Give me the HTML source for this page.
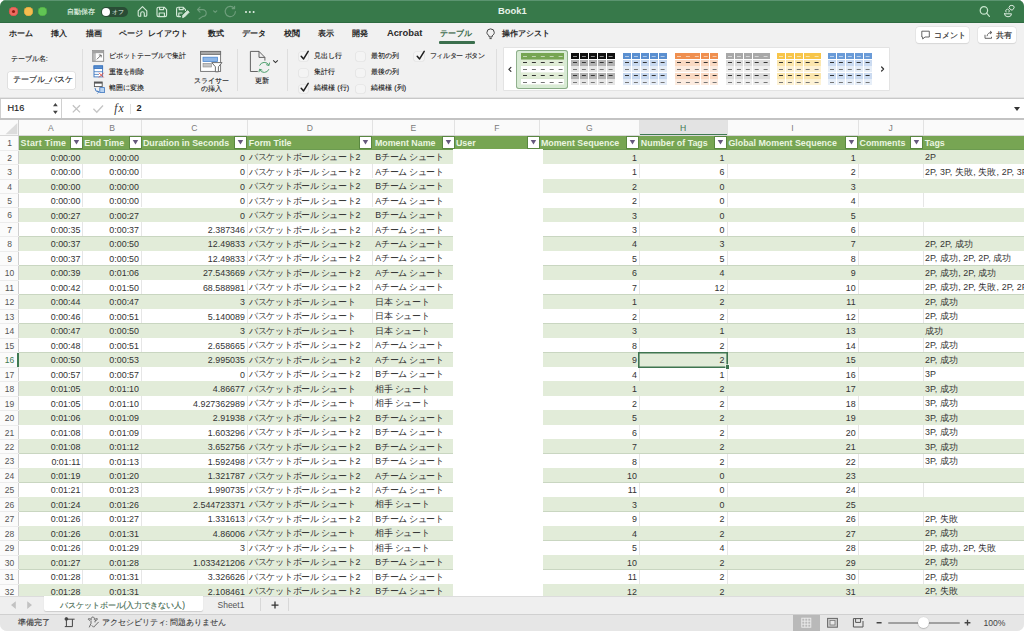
<!DOCTYPE html>
<html><head><meta charset="utf-8"><style>
*{box-sizing:border-box;margin:0;padding:0}
html,body{width:1024px;height:631px;overflow:hidden;background:#fff;font-family:"Liberation Sans",sans-serif}
.a{position:absolute}
#win{position:absolute;left:0;top:0;width:1024px;height:631px;overflow:hidden;border-radius:6px 6px 7px 7px;background:#f1f1f1}
.t{position:absolute;white-space:nowrap;line-height:1}
.rb{-webkit-text-stroke:0.12px currentColor}
.bb{-webkit-text-stroke:0.15px currentColor}
</style></head><body><div id="win">

<div class="a" style="left:0;top:0;width:1024px;height:23px;background:#37794a"></div>
<div class="a" style="left:0;top:0;width:1024px;height:1px;background:#5b9470"></div>
<div class="a" style="left:0;top:21.5px;width:1024px;height:1.5px;background:#2e6b41"></div>
<div class="a" style="left:9.3px;top:7.1px;width:9.2px;height:9.2px;border-radius:50%;background:#ee6a5f;box-shadow:inset 0 0 0 0.6px #d0504a"></div>
<div class="a" style="left:23.5px;top:7.1px;width:9.2px;height:9.2px;border-radius:50%;background:#f5bd4f;box-shadow:inset 0 0 0 0.6px #d8a03c"></div>
<div class="a" style="left:38.199999999999996px;top:7.1px;width:9.2px;height:9.2px;border-radius:50%;background:#61c454;box-shadow:inset 0 0 0 0.6px #4aa63f"></div>
<div class="a" style="left:12.3px;top:10.1px;width:3.2px;height:3.2px;border-radius:50%;background:#8c1a10"></div>
<div class="t" style="left:67px;top:8px;font-size:7.4px;color:#dcebdf;-webkit-text-stroke:0.2px #dcebdf">自動保存</div>
<div class="a" style="left:101px;top:7.4px;width:27px;height:9.2px;border-radius:5px;background:#294c35"></div>
<div class="a" style="left:101.6px;top:7.9px;width:8.2px;height:8.2px;border-radius:50%;background:#fff"></div>
<div class="t" style="left:111.5px;top:8.6px;font-size:6px;color:#e8f0ea">オフ</div>
<div class="t" style="left:498px;top:6.3px;font-size:9.4px;font-weight:bold;color:#e6f2e8">Book1</div>
<svg class="a" style="left:0;top:0" width="1024" height="23" viewBox="0 0 1024 23" fill="none" stroke="#d3e8d7" stroke-width="1.15" stroke-linejoin="round" stroke-linecap="round">
<path d="M138.2 10.8 L142.5 6.6 L146.8 10.8 V15.2 Q146.8 16.2 145.8 16.2 H144.3 V13.6 A1.8 1.8 0 0 0 140.7 13.6 V16.2 H139.2 Q138.2 16.2 138.2 15.2 Z"/>
<path d="M158.6 7.2 H164.2 L166.6 9.6 V15 Q166.6 16.6 165 16.6 H158.6 Q157 16.6 157 15 V8.8 Q157 7.2 158.6 7.2 Z M159.6 7.2 V9.6 H163.6 V7.2 M159.2 16.6 V13 H164.4 V16.6"/>
<path d="M185.5 10.5 V9.6 L183.1 7.2 H178.2 Q176.6 7.2 176.6 8.8 V15 Q176.6 16.6 178.2 16.6 H180.5 M179.2 7.2 V9.6 H183.2 V7.2 M178.8 16.6 V13 H182"/>
<path d="M182.6 17.2 L182.9 15.3 L187.6 10.6 L189.2 12.2 L184.5 16.9 Z" fill="#d3e8d7" stroke-width="0.9"/>
<g stroke="#6e9e7c"><path d="M197.5 9.6 H202.8 A3.4 3.4 0 0 1 202.8 16.4 M197.5 9.6 L200 7.1 M197.5 9.6 L200 12.1 M202.8 16.4 L199 19"/>
<path d="M213.6 10.9 L215.2 12.3 L216.8 10.9"/>
<path d="M234.2 8.2 A5.1 5.1 0 1 0 235.4 11.6 M234.6 6.2 V8.6 H232.2"/></g>
</svg>
<div class="a" style="left:245px;top:10.6px;width:2.2px;height:2.2px;border-radius:50%;background:#e4efe6;box-shadow:3.8px 0 0 #e4efe6,7.6px 0 0 #e4efe6"></div>
<svg class="a" style="left:960px;top:0" width="64" height="23" viewBox="960 0 64 23" fill="none" stroke="#dcebdf" stroke-width="1" stroke-linecap="round">
<circle cx="983.9" cy="10.4" r="3.7" stroke="#c8e6cd" stroke-width="1.2"/><path d="M986.6 13.2 L989.4 16.3" stroke="#c8e6cd" stroke-width="1.2"/>
<path d="M1004.5 13.8 H1011.5 A3.5 3 0 0 1 1004.5 13.8 Z M1006 12 A1.8 1.8 0 1 1 1009 12 M1009 7.3 A2.6 2.2 0 0 1 1014.2 7.8 L1012.2 10.3 L1010.3 9.2 Z"/>
</svg>
<div class="t" style="left:8.5px;top:28.8px;font-size:8.45px;font-weight:bold;color:#2a2a2a;">ホーム</div>
<div class="t" style="left:51.4px;top:28.8px;font-size:8.45px;font-weight:bold;color:#2a2a2a;">挿入</div>
<div class="t" style="left:85.6px;top:28.8px;font-size:8.45px;font-weight:bold;color:#2a2a2a;">描画</div>
<div class="t" style="left:119.3px;top:28.8px;font-size:8.45px;font-weight:bold;color:#2a2a2a;word-spacing:2.2px;">ページ レイアウト</div>
<div class="t" style="left:207.60000000000002px;top:28.8px;font-size:8.45px;font-weight:bold;color:#2a2a2a;">数式</div>
<div class="t" style="left:241.8px;top:28.8px;font-size:8.45px;font-weight:bold;color:#2a2a2a;">データ</div>
<div class="t" style="left:284.3px;top:28.8px;font-size:8.45px;font-weight:bold;color:#2a2a2a;">校閲</div>
<div class="t" style="left:318.1px;top:28.8px;font-size:8.45px;font-weight:bold;color:#2a2a2a;">表示</div>
<div class="t" style="left:352.3px;top:28.8px;font-size:8.45px;font-weight:bold;color:#2a2a2a;">開発</div>
<div class="t" style="left:386.90000000000003px;top:28.0px;font-size:9.4px;font-weight:bold;color:#2a2a2a;">Acrobat</div>
<div class="t" style="left:440.3px;top:28.8px;font-size:8.45px;font-weight:bold;color:#3d6b4c;">テーブル</div>
<div class="t" style="left:501.8px;top:28.8px;font-size:8.45px;font-weight:bold;color:#2a2a2a;">操作アシスト</div>
<div class="a" style="left:439px;top:41.4px;width:35.6px;height:2.2px;border-radius:1.1px;background:#3b6f4d"></div>
<svg class="a" style="left:484px;top:26px" width="14" height="16" viewBox="484 26 14 16" fill="none" stroke="#444" stroke-width="0.9"><path d="M489.1 37 V35.8 C487.6 34.8 486.9 33.6 486.9 32.6 A3.7 3.7 0 0 1 494.3 32.6 C494.3 33.6 493.6 34.8 492.1 35.8 V37 Z M489.5 38.6 H491.7" stroke-width="1"/></svg>
<div class="a" style="left:915.7px;top:26.6px;width:53.3px;height:16px;border-radius:3px;background:#fff;box-shadow:0 0 0 0.5px #dcdcdc,0 0.5px 1px rgba(0,0,0,.12)"></div>
<div class="a" style="left:978px;top:26.6px;width:38.2px;height:16px;border-radius:3px;background:#fff;box-shadow:0 0 0 0.5px #dcdcdc,0 0.5px 1px rgba(0,0,0,.12)"></div>
<svg class="a" style="left:915px;top:26px" width="100" height="18" viewBox="915 26 100 18" fill="none" stroke="#555" stroke-width="0.9" stroke-linejoin="round">
<path d="M921.8 31.2 H929.3 V37 H925 L922.7 39 V37 H921.8 Z"/>
<path d="M985 34.8 V38.3 H991.5 V36.8 M987 36.2 C987.5 33.5 989.2 32.5 991.5 32.5 M990 31 L991.9 32.5 L990 34"/>
</svg>
<div class="t" style="left:933.9px;top:31.6px;font-size:7.8px;color:#333;-webkit-text-stroke:0.2px #333">コメント</div>
<div class="t" style="left:996.2px;top:31.6px;font-size:7.8px;color:#333;-webkit-text-stroke:0.2px #333">共有</div>
<div class="t rb" style="left:10.8px;top:54.8px;font-size:7.2px;color:#222">テーブル名:</div>
<div class="a" style="left:7.7px;top:71.5px;width:67.3px;height:17px;border-radius:1.8px;background:#fff;box-shadow:0 0 0 0.6px #d6d6d6"></div>
<div class="t" style="left:12.7px;top:76.4px;font-size:8.1px;color:#222;-webkit-text-stroke:0.15px #222">テーブル_バスケ</div>
<div class="a" style="left:81.9px;top:48.5px;width:1px;height:42.5px;background:#dedede"></div>
<div class="a" style="left:237.3px;top:48.5px;width:1px;height:42.5px;background:#dedede"></div>
<div class="a" style="left:287.2px;top:48.5px;width:1px;height:42.5px;background:#dedede"></div>
<div class="a" style="left:495.6px;top:48.5px;width:1px;height:42.5px;background:#dedede"></div>
<div class="t rb" style="left:109.4px;top:51.800000000000004px;font-size:7.2px;color:#222">ピボットテーブルで集計</div>
<div class="t rb" style="left:109.4px;top:68.2px;font-size:7.2px;color:#222">重複を削除</div>
<div class="t rb" style="left:109.4px;top:83.9px;font-size:7.2px;color:#222">範囲に変換</div>
<svg class="a" style="left:85px;top:44px" width="150" height="52" viewBox="85 44 150 52" fill="none" stroke-width="0.8">
<rect x="92.6" y="50.4" width="11.2" height="11.2" fill="#a3a3a3" stroke="#8a8a8a" stroke-width="0.6"/>
<rect x="95.6" y="53.2" width="7.4" height="7.6" fill="#fff" stroke="none"/>
<path d="M94.1 53.4 V60.6" stroke="#e8e8e8" stroke-width="0.7"/>
<path d="M96.8 59.4 L101.2 55 M101.2 55 V57.4 M101.2 55 H98.8" stroke="#555" stroke-width="0.8"/>
<rect x="94" y="65.9" width="8.6" height="11" fill="#fff" stroke="#3d76c0" stroke-width="0.9"/>
<rect x="94" y="65.9" width="8.6" height="2.6" fill="#5a8fd0" stroke="#3d76c0" stroke-width="0.9"/>
<path d="M94 71.7 H102.6 M94 74.4 H99" stroke="#3d76c0" stroke-width="0.8"/>
<path d="M99 72.8 L103.6 77.4 M103.6 72.8 L99 77.4" stroke="#e14a3c" stroke-width="0.9"/>
<rect x="94.4" y="82" width="7.8" height="4.6" fill="#fff" stroke="#555" stroke-width="0.9"/>
<rect x="94.4" y="82" width="7.8" height="1.6" fill="#555" stroke="none"/>
<path d="M95 88 Q95 92 98.8 92 M97.4 90.6 L98.8 92 L97.4 93.4" stroke="#3d76c0" stroke-width="0.9"/>
<rect x="99.8" y="87.6" width="4.6" height="5" fill="#b9d3f0" stroke="#3d76c0" stroke-width="0.8"/>
<rect x="200.6" y="51.4" width="20" height="20" fill="#fff" stroke="#6f6f6f" stroke-width="0.9"/>
<rect x="200.6" y="51.4" width="20" height="3" fill="#a8a8a8" stroke="#6f6f6f" stroke-width="0.9"/>
<rect x="203" y="57.2" width="14.4" height="4.2" fill="#8db6e6" stroke="#4a86cf" stroke-width="0.8"/>
<rect x="203" y="63.4" width="8.4" height="3.6" fill="#c4c4c4" stroke="#8a8a8a" stroke-width="0.6"/>
<path d="M211.8 62.6 H222 L218.4 66.8 V71.8 H215.4 V66.8 Z" fill="#fff" stroke="#5f5f5f" stroke-width="0.9" stroke-linejoin="round"/>
</svg>
<div class="t rb" style="left:193.8px;top:77.2px;font-size:7.4px;color:#222">スライサー</div>
<div class="t rb" style="left:200.5px;top:85.4px;font-size:7.4px;color:#222">の挿入</div>
<svg class="a" style="left:245px;top:48px" width="40" height="28" viewBox="245 48 40 28" fill="none" stroke-width="0.9">
<path d="M259 51.4 H250.4 V71.5 H257.8 M259 51.4 L264.9 57.4 V60.6 M259 51.4 V57.4 H264.9" stroke="#555" stroke-linejoin="miter"/>
<path d="M268.9 65.2 A5.1 5.1 0 0 0 259.6 65.6 M259.6 69.6 A5.1 5.1 0 0 0 268.9 69.2" stroke="#4f9f6e" stroke-width="1"/>
<path d="M269.6 62.6 L268.9 65.6 L266.2 64.6 M258.9 72.2 L259.6 69.2 L262.3 70.2" stroke="#4f9f6e" stroke-width="1" stroke-linejoin="round"/>
<path d="M273.2 60.4 L275.5 62.6 L277.8 60.4" stroke="#333" stroke-width="1.1"/>
</svg>
<div class="t rb" style="left:254.5px;top:77.2px;font-size:7.4px;color:#222">更新</div>
<div class="a" style="left:298.7px;top:52.4px;width:9.8px;height:8.2px;border-radius:2px;background:#f4f4f4;box-shadow:0 0 0 0.6px #e0e0e0"></div>
<svg class="a" style="left:299.3px;top:48.6px" width="12" height="12" viewBox="0 0 12 12"><path d="M2.2 7.2 L4.6 9.9 L9.2 2.4" fill="none" stroke="#1e1e1e" stroke-width="1.5" stroke-linecap="round" stroke-linejoin="round"/></svg>
<div class="t rb" style="left:314.3px;top:51.800000000000004px;font-size:7.2px;color:#222;">見出し行</div>
<div class="a" style="left:298.7px;top:68.8px;width:9.8px;height:8.2px;border-radius:2px;background:#f4f4f4;box-shadow:0 0 0 0.6px #e0e0e0"></div>
<div class="t rb" style="left:314.3px;top:68.2px;font-size:7.2px;color:#222;">集計行</div>
<div class="a" style="left:298.7px;top:84.5px;width:9.8px;height:8.2px;border-radius:2px;background:#f4f4f4;box-shadow:0 0 0 0.6px #e0e0e0"></div>
<svg class="a" style="left:299.3px;top:80.7px" width="12" height="12" viewBox="0 0 12 12"><path d="M2.2 7.2 L4.6 9.9 L9.2 2.4" fill="none" stroke="#1e1e1e" stroke-width="1.5" stroke-linecap="round" stroke-linejoin="round"/></svg>
<div class="t rb" style="left:314.3px;top:83.9px;font-size:7.2px;color:#222;">縞模様 (行)</div>
<div class="a" style="left:355.7px;top:52.4px;width:9.8px;height:8.2px;border-radius:2px;background:#f4f4f4;box-shadow:0 0 0 0.6px #e0e0e0"></div>
<div class="t rb" style="left:371.3px;top:51.800000000000004px;font-size:7.2px;color:#222;">最初の列</div>
<div class="a" style="left:355.7px;top:68.8px;width:9.8px;height:8.2px;border-radius:2px;background:#f4f4f4;box-shadow:0 0 0 0.6px #e0e0e0"></div>
<div class="t rb" style="left:371.3px;top:68.2px;font-size:7.2px;color:#222;">最後の列</div>
<div class="a" style="left:355.7px;top:84.5px;width:9.8px;height:8.2px;border-radius:2px;background:#f4f4f4;box-shadow:0 0 0 0.6px #e0e0e0"></div>
<div class="t rb" style="left:371.3px;top:83.9px;font-size:7.2px;color:#222;">縞模様 (列)</div>
<div class="a" style="left:414.2px;top:52.4px;width:9.8px;height:8.2px;border-radius:2px;background:#f4f4f4;box-shadow:0 0 0 0.6px #e0e0e0"></div>
<svg class="a" style="left:414.8px;top:48.6px" width="12" height="12" viewBox="0 0 12 12"><path d="M2.2 7.2 L4.6 9.9 L9.2 2.4" fill="none" stroke="#1e1e1e" stroke-width="1.5" stroke-linecap="round" stroke-linejoin="round"/></svg>
<div class="t rb" style="left:429.8px;top:51.800000000000004px;font-size:7.2px;color:#222;letter-spacing:-0.35px;">フィルター ボタン</div>
<div class="a" style="left:504px;top:48.1px;width:384.5px;height:42.2px;background:#fff;box-shadow:0 0 0 0.6px #d9d9d9"></div>
<svg class="a" style="left:504px;top:48px" width="385" height="43" viewBox="504 48 385 43" fill="none" stroke="#333" stroke-width="0.9" stroke-linecap="round" stroke-linejoin="round"><path d="M510.9 67.4 L508.9 69.4 L510.9 71.4" stroke-width="1.2"/><path d="M881.6 67 L883.6 69 L881.6 71" stroke-width="1.2"/></svg>
<div class="a" style="left:516.2px;top:50px;width:51.8px;height:38.6px;border-radius:3px;background:#d9ebd5;box-shadow:inset 0 0 0 0.9px #89ab86"></div>
<div class="a" style="left:520.6px;top:53.2px;width:43px;height:6.55px;background:#77a552;box-shadow:inset 0 -0.5px 0 #d5e3cc"></div>
<div class="a" style="left:522.8px;top:55.6px;width:4px;height:1.1px;background:rgba(255,255,255,.55);box-shadow:8.9px 0 0 rgba(255,255,255,.55),17.8px 0 0 rgba(255,255,255,.55),26.7px 0 0 rgba(255,255,255,.55),35.6px 0 0 rgba(255,255,255,.55)"></div>
<div class="a" style="left:520.6px;top:59.75px;width:43px;height:6.55px;background:#e0ecd6;box-shadow:inset 0 -0.5px 0 #d5e3cc"></div>
<div class="a" style="left:522.8px;top:62.15px;width:4px;height:1.1px;background:#333;box-shadow:8.9px 0 0 #333,17.8px 0 0 #333,26.7px 0 0 #333,35.6px 0 0 #333"></div>
<div class="a" style="left:520.6px;top:66.3px;width:43px;height:6.55px;background:#ffffff;box-shadow:inset 0 -0.5px 0 #d5e3cc"></div>
<div class="a" style="left:522.8px;top:68.7px;width:4px;height:1.1px;background:#777;box-shadow:8.9px 0 0 #777,17.8px 0 0 #777,26.7px 0 0 #777,35.6px 0 0 #777"></div>
<div class="a" style="left:520.6px;top:72.85px;width:43px;height:6.55px;background:#e0ecd6;box-shadow:inset 0 -0.5px 0 #d5e3cc"></div>
<div class="a" style="left:522.8px;top:75.25px;width:4px;height:1.1px;background:#333;box-shadow:8.9px 0 0 #333,17.8px 0 0 #333,26.7px 0 0 #333,35.6px 0 0 #333"></div>
<div class="a" style="left:520.6px;top:79.4px;width:43px;height:6px;background:#ffffff;box-shadow:inset 0 -0.5px 0 #d5e3cc"></div>
<div class="a" style="left:522.8px;top:81.8px;width:4px;height:1.1px;background:#777;box-shadow:8.9px 0 0 #777,17.8px 0 0 #777,26.7px 0 0 #777,35.6px 0 0 #777"></div>
<div class="a" style="left:571.2px;top:53.2px;width:8.2px;height:6px;background:#101010"></div>
<div class="a" style="left:580.1px;top:53.2px;width:8.2px;height:6px;background:#101010"></div>
<div class="a" style="left:589px;top:53.2px;width:8.2px;height:6px;background:#101010"></div>
<div class="a" style="left:597.9px;top:53.2px;width:8.2px;height:6px;background:#101010"></div>
<div class="a" style="left:606.8px;top:53.2px;width:8.2px;height:6px;background:#101010"></div>
<div class="a" style="left:573.4px;top:55.6px;width:4px;height:1.1px;background:rgba(255,255,255,.55);box-shadow:8.9px 0 0 rgba(255,255,255,.55),17.8px 0 0 rgba(255,255,255,.55),26.7px 0 0 rgba(255,255,255,.55),35.6px 0 0 rgba(255,255,255,.55)"></div>
<div class="a" style="left:571.2px;top:59.75px;width:8.2px;height:6px;background:#b3b3b3"></div>
<div class="a" style="left:580.1px;top:59.75px;width:8.2px;height:6px;background:#b3b3b3"></div>
<div class="a" style="left:589px;top:59.75px;width:8.2px;height:6px;background:#b3b3b3"></div>
<div class="a" style="left:597.9px;top:59.75px;width:8.2px;height:6px;background:#b3b3b3"></div>
<div class="a" style="left:606.8px;top:59.75px;width:8.2px;height:6px;background:#b3b3b3"></div>
<div class="a" style="left:573.4px;top:62.15px;width:4px;height:1.1px;background:#333;box-shadow:8.9px 0 0 #333,17.8px 0 0 #333,26.7px 0 0 #333,35.6px 0 0 #333"></div>
<div class="a" style="left:571.2px;top:66.3px;width:8.2px;height:6px;background:#e6e6e6"></div>
<div class="a" style="left:580.1px;top:66.3px;width:8.2px;height:6px;background:#e6e6e6"></div>
<div class="a" style="left:589px;top:66.3px;width:8.2px;height:6px;background:#e6e6e6"></div>
<div class="a" style="left:597.9px;top:66.3px;width:8.2px;height:6px;background:#e6e6e6"></div>
<div class="a" style="left:606.8px;top:66.3px;width:8.2px;height:6px;background:#e6e6e6"></div>
<div class="a" style="left:573.4px;top:68.7px;width:4px;height:1.1px;background:#777;box-shadow:8.9px 0 0 #777,17.8px 0 0 #777,26.7px 0 0 #777,35.6px 0 0 #777"></div>
<div class="a" style="left:571.2px;top:72.85px;width:8.2px;height:6px;background:#b3b3b3"></div>
<div class="a" style="left:580.1px;top:72.85px;width:8.2px;height:6px;background:#b3b3b3"></div>
<div class="a" style="left:589px;top:72.85px;width:8.2px;height:6px;background:#b3b3b3"></div>
<div class="a" style="left:597.9px;top:72.85px;width:8.2px;height:6px;background:#b3b3b3"></div>
<div class="a" style="left:606.8px;top:72.85px;width:8.2px;height:6px;background:#b3b3b3"></div>
<div class="a" style="left:573.4px;top:75.25px;width:4px;height:1.1px;background:#333;box-shadow:8.9px 0 0 #333,17.8px 0 0 #333,26.7px 0 0 #333,35.6px 0 0 #333"></div>
<div class="a" style="left:571.2px;top:79.4px;width:8.2px;height:6px;background:#e6e6e6"></div>
<div class="a" style="left:580.1px;top:79.4px;width:8.2px;height:6px;background:#e6e6e6"></div>
<div class="a" style="left:589px;top:79.4px;width:8.2px;height:6px;background:#e6e6e6"></div>
<div class="a" style="left:597.9px;top:79.4px;width:8.2px;height:6px;background:#e6e6e6"></div>
<div class="a" style="left:606.8px;top:79.4px;width:8.2px;height:6px;background:#e6e6e6"></div>
<div class="a" style="left:573.4px;top:81.8px;width:4px;height:1.1px;background:#777;box-shadow:8.9px 0 0 #777,17.8px 0 0 #777,26.7px 0 0 #777,35.6px 0 0 #777"></div>
<div class="a" style="left:623.2px;top:53.2px;width:8.2px;height:6px;background:#5a8fd0"></div>
<div class="a" style="left:632.1px;top:53.2px;width:8.2px;height:6px;background:#5a8fd0"></div>
<div class="a" style="left:641px;top:53.2px;width:8.2px;height:6px;background:#5a8fd0"></div>
<div class="a" style="left:649.9px;top:53.2px;width:8.2px;height:6px;background:#5a8fd0"></div>
<div class="a" style="left:658.8px;top:53.2px;width:8.2px;height:6px;background:#5a8fd0"></div>
<div class="a" style="left:625.4px;top:55.6px;width:4px;height:1.1px;background:rgba(255,255,255,.55);box-shadow:8.9px 0 0 rgba(255,255,255,.55),17.8px 0 0 rgba(255,255,255,.55),26.7px 0 0 rgba(255,255,255,.55),35.6px 0 0 rgba(255,255,255,.55)"></div>
<div class="a" style="left:623.2px;top:59.75px;width:8.2px;height:6px;background:#c7d8ef"></div>
<div class="a" style="left:632.1px;top:59.75px;width:8.2px;height:6px;background:#c7d8ef"></div>
<div class="a" style="left:641px;top:59.75px;width:8.2px;height:6px;background:#c7d8ef"></div>
<div class="a" style="left:649.9px;top:59.75px;width:8.2px;height:6px;background:#c7d8ef"></div>
<div class="a" style="left:658.8px;top:59.75px;width:8.2px;height:6px;background:#c7d8ef"></div>
<div class="a" style="left:625.4px;top:62.15px;width:4px;height:1.1px;background:#333;box-shadow:8.9px 0 0 #333,17.8px 0 0 #333,26.7px 0 0 #333,35.6px 0 0 #333"></div>
<div class="a" style="left:623.2px;top:66.3px;width:8.2px;height:6px;background:#e4ecf7"></div>
<div class="a" style="left:632.1px;top:66.3px;width:8.2px;height:6px;background:#e4ecf7"></div>
<div class="a" style="left:641px;top:66.3px;width:8.2px;height:6px;background:#e4ecf7"></div>
<div class="a" style="left:649.9px;top:66.3px;width:8.2px;height:6px;background:#e4ecf7"></div>
<div class="a" style="left:658.8px;top:66.3px;width:8.2px;height:6px;background:#e4ecf7"></div>
<div class="a" style="left:625.4px;top:68.7px;width:4px;height:1.1px;background:#777;box-shadow:8.9px 0 0 #777,17.8px 0 0 #777,26.7px 0 0 #777,35.6px 0 0 #777"></div>
<div class="a" style="left:623.2px;top:72.85px;width:8.2px;height:6px;background:#c7d8ef"></div>
<div class="a" style="left:632.1px;top:72.85px;width:8.2px;height:6px;background:#c7d8ef"></div>
<div class="a" style="left:641px;top:72.85px;width:8.2px;height:6px;background:#c7d8ef"></div>
<div class="a" style="left:649.9px;top:72.85px;width:8.2px;height:6px;background:#c7d8ef"></div>
<div class="a" style="left:658.8px;top:72.85px;width:8.2px;height:6px;background:#c7d8ef"></div>
<div class="a" style="left:625.4px;top:75.25px;width:4px;height:1.1px;background:#333;box-shadow:8.9px 0 0 #333,17.8px 0 0 #333,26.7px 0 0 #333,35.6px 0 0 #333"></div>
<div class="a" style="left:623.2px;top:79.4px;width:8.2px;height:6px;background:#e4ecf7"></div>
<div class="a" style="left:632.1px;top:79.4px;width:8.2px;height:6px;background:#e4ecf7"></div>
<div class="a" style="left:641px;top:79.4px;width:8.2px;height:6px;background:#e4ecf7"></div>
<div class="a" style="left:649.9px;top:79.4px;width:8.2px;height:6px;background:#e4ecf7"></div>
<div class="a" style="left:658.8px;top:79.4px;width:8.2px;height:6px;background:#e4ecf7"></div>
<div class="a" style="left:625.4px;top:81.8px;width:4px;height:1.1px;background:#777;box-shadow:8.9px 0 0 #777,17.8px 0 0 #777,26.7px 0 0 #777,35.6px 0 0 #777"></div>
<div class="a" style="left:674.5px;top:53.2px;width:8.2px;height:6px;background:#ef8f4f"></div>
<div class="a" style="left:683.4px;top:53.2px;width:8.2px;height:6px;background:#ef8f4f"></div>
<div class="a" style="left:692.3px;top:53.2px;width:8.2px;height:6px;background:#ef8f4f"></div>
<div class="a" style="left:701.2px;top:53.2px;width:8.2px;height:6px;background:#ef8f4f"></div>
<div class="a" style="left:710.1px;top:53.2px;width:8.2px;height:6px;background:#ef8f4f"></div>
<div class="a" style="left:676.7px;top:55.6px;width:4px;height:1.1px;background:rgba(255,255,255,.55);box-shadow:8.9px 0 0 rgba(255,255,255,.55),17.8px 0 0 rgba(255,255,255,.55),26.7px 0 0 rgba(255,255,255,.55),35.6px 0 0 rgba(255,255,255,.55)"></div>
<div class="a" style="left:674.5px;top:59.75px;width:8.2px;height:6px;background:#fad9c2"></div>
<div class="a" style="left:683.4px;top:59.75px;width:8.2px;height:6px;background:#fad9c2"></div>
<div class="a" style="left:692.3px;top:59.75px;width:8.2px;height:6px;background:#fad9c2"></div>
<div class="a" style="left:701.2px;top:59.75px;width:8.2px;height:6px;background:#fad9c2"></div>
<div class="a" style="left:710.1px;top:59.75px;width:8.2px;height:6px;background:#fad9c2"></div>
<div class="a" style="left:676.7px;top:62.15px;width:4px;height:1.1px;background:#333;box-shadow:8.9px 0 0 #333,17.8px 0 0 #333,26.7px 0 0 #333,35.6px 0 0 #333"></div>
<div class="a" style="left:674.5px;top:66.3px;width:8.2px;height:6px;background:#fcebdf"></div>
<div class="a" style="left:683.4px;top:66.3px;width:8.2px;height:6px;background:#fcebdf"></div>
<div class="a" style="left:692.3px;top:66.3px;width:8.2px;height:6px;background:#fcebdf"></div>
<div class="a" style="left:701.2px;top:66.3px;width:8.2px;height:6px;background:#fcebdf"></div>
<div class="a" style="left:710.1px;top:66.3px;width:8.2px;height:6px;background:#fcebdf"></div>
<div class="a" style="left:676.7px;top:68.7px;width:4px;height:1.1px;background:#777;box-shadow:8.9px 0 0 #777,17.8px 0 0 #777,26.7px 0 0 #777,35.6px 0 0 #777"></div>
<div class="a" style="left:674.5px;top:72.85px;width:8.2px;height:6px;background:#fad9c2"></div>
<div class="a" style="left:683.4px;top:72.85px;width:8.2px;height:6px;background:#fad9c2"></div>
<div class="a" style="left:692.3px;top:72.85px;width:8.2px;height:6px;background:#fad9c2"></div>
<div class="a" style="left:701.2px;top:72.85px;width:8.2px;height:6px;background:#fad9c2"></div>
<div class="a" style="left:710.1px;top:72.85px;width:8.2px;height:6px;background:#fad9c2"></div>
<div class="a" style="left:676.7px;top:75.25px;width:4px;height:1.1px;background:#333;box-shadow:8.9px 0 0 #333,17.8px 0 0 #333,26.7px 0 0 #333,35.6px 0 0 #333"></div>
<div class="a" style="left:674.5px;top:79.4px;width:8.2px;height:6px;background:#fcebdf"></div>
<div class="a" style="left:683.4px;top:79.4px;width:8.2px;height:6px;background:#fcebdf"></div>
<div class="a" style="left:692.3px;top:79.4px;width:8.2px;height:6px;background:#fcebdf"></div>
<div class="a" style="left:701.2px;top:79.4px;width:8.2px;height:6px;background:#fcebdf"></div>
<div class="a" style="left:710.1px;top:79.4px;width:8.2px;height:6px;background:#fcebdf"></div>
<div class="a" style="left:676.7px;top:81.8px;width:4px;height:1.1px;background:#777;box-shadow:8.9px 0 0 #777,17.8px 0 0 #777,26.7px 0 0 #777,35.6px 0 0 #777"></div>
<div class="a" style="left:725.8px;top:53.2px;width:8.2px;height:6px;background:#a8a8a8"></div>
<div class="a" style="left:734.7px;top:53.2px;width:8.2px;height:6px;background:#a8a8a8"></div>
<div class="a" style="left:743.6px;top:53.2px;width:8.2px;height:6px;background:#a8a8a8"></div>
<div class="a" style="left:752.5px;top:53.2px;width:8.2px;height:6px;background:#a8a8a8"></div>
<div class="a" style="left:761.4px;top:53.2px;width:8.2px;height:6px;background:#a8a8a8"></div>
<div class="a" style="left:728px;top:55.6px;width:4px;height:1.1px;background:rgba(255,255,255,.55);box-shadow:8.9px 0 0 rgba(255,255,255,.55),17.8px 0 0 rgba(255,255,255,.55),26.7px 0 0 rgba(255,255,255,.55),35.6px 0 0 rgba(255,255,255,.55)"></div>
<div class="a" style="left:725.8px;top:59.75px;width:8.2px;height:6px;background:#dcdcdc"></div>
<div class="a" style="left:734.7px;top:59.75px;width:8.2px;height:6px;background:#dcdcdc"></div>
<div class="a" style="left:743.6px;top:59.75px;width:8.2px;height:6px;background:#dcdcdc"></div>
<div class="a" style="left:752.5px;top:59.75px;width:8.2px;height:6px;background:#dcdcdc"></div>
<div class="a" style="left:761.4px;top:59.75px;width:8.2px;height:6px;background:#dcdcdc"></div>
<div class="a" style="left:728px;top:62.15px;width:4px;height:1.1px;background:#333;box-shadow:8.9px 0 0 #333,17.8px 0 0 #333,26.7px 0 0 #333,35.6px 0 0 #333"></div>
<div class="a" style="left:725.8px;top:66.3px;width:8.2px;height:6px;background:#eeeeee"></div>
<div class="a" style="left:734.7px;top:66.3px;width:8.2px;height:6px;background:#eeeeee"></div>
<div class="a" style="left:743.6px;top:66.3px;width:8.2px;height:6px;background:#eeeeee"></div>
<div class="a" style="left:752.5px;top:66.3px;width:8.2px;height:6px;background:#eeeeee"></div>
<div class="a" style="left:761.4px;top:66.3px;width:8.2px;height:6px;background:#eeeeee"></div>
<div class="a" style="left:728px;top:68.7px;width:4px;height:1.1px;background:#777;box-shadow:8.9px 0 0 #777,17.8px 0 0 #777,26.7px 0 0 #777,35.6px 0 0 #777"></div>
<div class="a" style="left:725.8px;top:72.85px;width:8.2px;height:6px;background:#dcdcdc"></div>
<div class="a" style="left:734.7px;top:72.85px;width:8.2px;height:6px;background:#dcdcdc"></div>
<div class="a" style="left:743.6px;top:72.85px;width:8.2px;height:6px;background:#dcdcdc"></div>
<div class="a" style="left:752.5px;top:72.85px;width:8.2px;height:6px;background:#dcdcdc"></div>
<div class="a" style="left:761.4px;top:72.85px;width:8.2px;height:6px;background:#dcdcdc"></div>
<div class="a" style="left:728px;top:75.25px;width:4px;height:1.1px;background:#333;box-shadow:8.9px 0 0 #333,17.8px 0 0 #333,26.7px 0 0 #333,35.6px 0 0 #333"></div>
<div class="a" style="left:725.8px;top:79.4px;width:8.2px;height:6px;background:#eeeeee"></div>
<div class="a" style="left:734.7px;top:79.4px;width:8.2px;height:6px;background:#eeeeee"></div>
<div class="a" style="left:743.6px;top:79.4px;width:8.2px;height:6px;background:#eeeeee"></div>
<div class="a" style="left:752.5px;top:79.4px;width:8.2px;height:6px;background:#eeeeee"></div>
<div class="a" style="left:761.4px;top:79.4px;width:8.2px;height:6px;background:#eeeeee"></div>
<div class="a" style="left:728px;top:81.8px;width:4px;height:1.1px;background:#777;box-shadow:8.9px 0 0 #777,17.8px 0 0 #777,26.7px 0 0 #777,35.6px 0 0 #777"></div>
<div class="a" style="left:776.8px;top:53.2px;width:8.2px;height:6px;background:#f7c549"></div>
<div class="a" style="left:785.7px;top:53.2px;width:8.2px;height:6px;background:#f7c549"></div>
<div class="a" style="left:794.6px;top:53.2px;width:8.2px;height:6px;background:#f7c549"></div>
<div class="a" style="left:803.5px;top:53.2px;width:8.2px;height:6px;background:#f7c549"></div>
<div class="a" style="left:812.4px;top:53.2px;width:8.2px;height:6px;background:#f7c549"></div>
<div class="a" style="left:779px;top:55.6px;width:4px;height:1.1px;background:rgba(255,255,255,.55);box-shadow:8.9px 0 0 rgba(255,255,255,.55),17.8px 0 0 rgba(255,255,255,.55),26.7px 0 0 rgba(255,255,255,.55),35.6px 0 0 rgba(255,255,255,.55)"></div>
<div class="a" style="left:776.8px;top:59.75px;width:8.2px;height:6px;background:#fbe6ad"></div>
<div class="a" style="left:785.7px;top:59.75px;width:8.2px;height:6px;background:#fbe6ad"></div>
<div class="a" style="left:794.6px;top:59.75px;width:8.2px;height:6px;background:#fbe6ad"></div>
<div class="a" style="left:803.5px;top:59.75px;width:8.2px;height:6px;background:#fbe6ad"></div>
<div class="a" style="left:812.4px;top:59.75px;width:8.2px;height:6px;background:#fbe6ad"></div>
<div class="a" style="left:779px;top:62.15px;width:4px;height:1.1px;background:#333;box-shadow:8.9px 0 0 #333,17.8px 0 0 #333,26.7px 0 0 #333,35.6px 0 0 #333"></div>
<div class="a" style="left:776.8px;top:66.3px;width:8.2px;height:6px;background:#fdf2d5"></div>
<div class="a" style="left:785.7px;top:66.3px;width:8.2px;height:6px;background:#fdf2d5"></div>
<div class="a" style="left:794.6px;top:66.3px;width:8.2px;height:6px;background:#fdf2d5"></div>
<div class="a" style="left:803.5px;top:66.3px;width:8.2px;height:6px;background:#fdf2d5"></div>
<div class="a" style="left:812.4px;top:66.3px;width:8.2px;height:6px;background:#fdf2d5"></div>
<div class="a" style="left:779px;top:68.7px;width:4px;height:1.1px;background:#777;box-shadow:8.9px 0 0 #777,17.8px 0 0 #777,26.7px 0 0 #777,35.6px 0 0 #777"></div>
<div class="a" style="left:776.8px;top:72.85px;width:8.2px;height:6px;background:#fbe6ad"></div>
<div class="a" style="left:785.7px;top:72.85px;width:8.2px;height:6px;background:#fbe6ad"></div>
<div class="a" style="left:794.6px;top:72.85px;width:8.2px;height:6px;background:#fbe6ad"></div>
<div class="a" style="left:803.5px;top:72.85px;width:8.2px;height:6px;background:#fbe6ad"></div>
<div class="a" style="left:812.4px;top:72.85px;width:8.2px;height:6px;background:#fbe6ad"></div>
<div class="a" style="left:779px;top:75.25px;width:4px;height:1.1px;background:#333;box-shadow:8.9px 0 0 #333,17.8px 0 0 #333,26.7px 0 0 #333,35.6px 0 0 #333"></div>
<div class="a" style="left:776.8px;top:79.4px;width:8.2px;height:6px;background:#fdf2d5"></div>
<div class="a" style="left:785.7px;top:79.4px;width:8.2px;height:6px;background:#fdf2d5"></div>
<div class="a" style="left:794.6px;top:79.4px;width:8.2px;height:6px;background:#fdf2d5"></div>
<div class="a" style="left:803.5px;top:79.4px;width:8.2px;height:6px;background:#fdf2d5"></div>
<div class="a" style="left:812.4px;top:79.4px;width:8.2px;height:6px;background:#fdf2d5"></div>
<div class="a" style="left:779px;top:81.8px;width:4px;height:1.1px;background:#777;box-shadow:8.9px 0 0 #777,17.8px 0 0 #777,26.7px 0 0 #777,35.6px 0 0 #777"></div>
<div class="a" style="left:828px;top:53.2px;width:8.2px;height:6px;background:#6a9bd8"></div>
<div class="a" style="left:836.9px;top:53.2px;width:8.2px;height:6px;background:#6a9bd8"></div>
<div class="a" style="left:845.8px;top:53.2px;width:8.2px;height:6px;background:#6a9bd8"></div>
<div class="a" style="left:854.7px;top:53.2px;width:8.2px;height:6px;background:#6a9bd8"></div>
<div class="a" style="left:863.6px;top:53.2px;width:8.2px;height:6px;background:#6a9bd8"></div>
<div class="a" style="left:830.2px;top:55.6px;width:4px;height:1.1px;background:rgba(255,255,255,.55);box-shadow:8.9px 0 0 rgba(255,255,255,.55),17.8px 0 0 rgba(255,255,255,.55),26.7px 0 0 rgba(255,255,255,.55),35.6px 0 0 rgba(255,255,255,.55)"></div>
<div class="a" style="left:828px;top:59.75px;width:8.2px;height:6px;background:#cbdbf1"></div>
<div class="a" style="left:836.9px;top:59.75px;width:8.2px;height:6px;background:#cbdbf1"></div>
<div class="a" style="left:845.8px;top:59.75px;width:8.2px;height:6px;background:#cbdbf1"></div>
<div class="a" style="left:854.7px;top:59.75px;width:8.2px;height:6px;background:#cbdbf1"></div>
<div class="a" style="left:863.6px;top:59.75px;width:8.2px;height:6px;background:#cbdbf1"></div>
<div class="a" style="left:830.2px;top:62.15px;width:4px;height:1.1px;background:#333;box-shadow:8.9px 0 0 #333,17.8px 0 0 #333,26.7px 0 0 #333,35.6px 0 0 #333"></div>
<div class="a" style="left:828px;top:66.3px;width:8.2px;height:6px;background:#e6eef8"></div>
<div class="a" style="left:836.9px;top:66.3px;width:8.2px;height:6px;background:#e6eef8"></div>
<div class="a" style="left:845.8px;top:66.3px;width:8.2px;height:6px;background:#e6eef8"></div>
<div class="a" style="left:854.7px;top:66.3px;width:8.2px;height:6px;background:#e6eef8"></div>
<div class="a" style="left:863.6px;top:66.3px;width:8.2px;height:6px;background:#e6eef8"></div>
<div class="a" style="left:830.2px;top:68.7px;width:4px;height:1.1px;background:#777;box-shadow:8.9px 0 0 #777,17.8px 0 0 #777,26.7px 0 0 #777,35.6px 0 0 #777"></div>
<div class="a" style="left:828px;top:72.85px;width:8.2px;height:6px;background:#cbdbf1"></div>
<div class="a" style="left:836.9px;top:72.85px;width:8.2px;height:6px;background:#cbdbf1"></div>
<div class="a" style="left:845.8px;top:72.85px;width:8.2px;height:6px;background:#cbdbf1"></div>
<div class="a" style="left:854.7px;top:72.85px;width:8.2px;height:6px;background:#cbdbf1"></div>
<div class="a" style="left:863.6px;top:72.85px;width:8.2px;height:6px;background:#cbdbf1"></div>
<div class="a" style="left:830.2px;top:75.25px;width:4px;height:1.1px;background:#333;box-shadow:8.9px 0 0 #333,17.8px 0 0 #333,26.7px 0 0 #333,35.6px 0 0 #333"></div>
<div class="a" style="left:828px;top:79.4px;width:8.2px;height:6px;background:#e6eef8"></div>
<div class="a" style="left:836.9px;top:79.4px;width:8.2px;height:6px;background:#e6eef8"></div>
<div class="a" style="left:845.8px;top:79.4px;width:8.2px;height:6px;background:#e6eef8"></div>
<div class="a" style="left:854.7px;top:79.4px;width:8.2px;height:6px;background:#e6eef8"></div>
<div class="a" style="left:863.6px;top:79.4px;width:8.2px;height:6px;background:#e6eef8"></div>
<div class="a" style="left:830.2px;top:81.8px;width:4px;height:1.1px;background:#777;box-shadow:8.9px 0 0 #777,17.8px 0 0 #777,26.7px 0 0 #777,35.6px 0 0 #777"></div>
<div class="a" style="left:0;top:96.6px;width:1024px;height:1px;background:#e2e2e2"></div>
<div class="a" style="left:0;top:97.6px;width:1024px;height:1.8px;background:#c8c8c8"></div>
<div class="a" style="left:0;top:99.4px;width:1024px;height:18.8px;background:#fff"></div>
<div class="a" style="left:0;top:118.2px;width:1024px;height:1.6px;background:#c3c3c3"></div>
<div class="a" style="left:0;top:99.4px;width:1px;height:18.8px;background:#cfcfcf"></div>
<div class="a" style="left:61.2px;top:99.4px;width:1px;height:18.8px;background:#d0d0d0"></div>
<div class="a" style="left:130.2px;top:104px;width:0.8px;height:10px;background:#e0e0e0"></div>
<div class="t bb" style="left:7.4px;top:104px;font-size:9.2px;color:#222">H16</div>
<svg class="a" style="left:50px;top:100px" width="80" height="18" viewBox="50 100 80 18">
<path d="M53 106.2 L55.4 103 L57.8 106.2 Z M53 110.8 L55.4 114 L57.8 110.8 Z" fill="#444"/>
<path d="M72.8 105.2 L80 112.4 M80 105.2 L72.8 112.4" stroke="#c2c2c2" stroke-width="1.3" fill="none"/>
<path d="M93.4 108.8 L96.8 112.2 L103 105.6" stroke="#c6c6c6" stroke-width="1.4" fill="none"/>
</svg>
<div class="t" style="left:114.3px;top:102.6px;letter-spacing:0.9px;font-size:11.6px;font-style:italic;font-family:'Liberation Serif',serif;color:#333">fx</div>
<div class="t" style="left:136.6px;top:104px;font-size:9.2px;font-weight:bold;color:#222">2</div>
<svg class="a" style="left:1012px;top:104px" width="10" height="10" viewBox="0 0 10 10"><path d="M2 3 L5 7 L8 3 Z" fill="#333"/></svg>
<div class="a" style="left:0;top:119.8px;width:1024px;height:476px;background:#fff"></div>
<div class="a" style="left:0;top:119.8px;width:1024px;height:15.7px;background:#fafafa"></div>
<div class="a" style="left:0;top:135px;width:1024px;height:0.8px;background:#d8d8d8"></div>
<svg class="a" style="left:0;top:119.8px" width="19" height="16" viewBox="0 0 19 16"><path d="M17.3 3 V14.3 H5.5 Z" fill="#dcdcdc"/></svg>
<div class="a" style="left:639.3px;top:119.8px;width:87.60000000000002px;height:15.7px;background:#e3e3e3"></div>
<div class="a" style="left:639.3px;top:133.6px;width:87.60000000000002px;height:1.9px;background:#3f7a52"></div>
<div class="a" style="left:82.4px;top:119.8px;width:0.8px;height:15.7px;background:#e2e2e2"></div>
<div class="t" style="left:19px;top:123.8px;width:63.8px;text-align:center;font-size:8.6px;color:#7a7a7a">A</div>
<div class="a" style="left:141px;top:119.8px;width:0.8px;height:15.7px;background:#e2e2e2"></div>
<div class="t" style="left:82.8px;top:123.8px;width:58.6px;text-align:center;font-size:8.6px;color:#7a7a7a">B</div>
<div class="a" style="left:246.9px;top:119.8px;width:0.8px;height:15.7px;background:#e2e2e2"></div>
<div class="t" style="left:141.4px;top:123.8px;width:105.9px;text-align:center;font-size:8.6px;color:#7a7a7a">C</div>
<div class="a" style="left:371.9px;top:119.8px;width:0.8px;height:15.7px;background:#e2e2e2"></div>
<div class="t" style="left:247.3px;top:123.8px;width:125px;text-align:center;font-size:8.6px;color:#7a7a7a">D</div>
<div class="a" style="left:454px;top:119.8px;width:0.8px;height:15.7px;background:#e2e2e2"></div>
<div class="t" style="left:372.3px;top:123.8px;width:82.1px;text-align:center;font-size:8.6px;color:#7a7a7a">E</div>
<div class="a" style="left:539px;top:119.8px;width:0.8px;height:15.7px;background:#e2e2e2"></div>
<div class="t" style="left:454.4px;top:123.8px;width:85px;text-align:center;font-size:8.6px;color:#7a7a7a">F</div>
<div class="a" style="left:638.9px;top:119.8px;width:0.8px;height:15.7px;background:#e2e2e2"></div>
<div class="t" style="left:539.4px;top:123.8px;width:99.9px;text-align:center;font-size:8.6px;color:#7a7a7a">G</div>
<div class="a" style="left:726.5px;top:119.8px;width:0.8px;height:15.7px;background:#e2e2e2"></div>
<div class="t" style="left:639.3px;top:123.8px;width:87.6px;text-align:center;font-size:8.6px;color:#3f7a52">H</div>
<div class="a" style="left:857.6px;top:119.8px;width:0.8px;height:15.7px;background:#e2e2e2"></div>
<div class="t" style="left:726.9px;top:123.8px;width:131.1px;text-align:center;font-size:8.6px;color:#7a7a7a">I</div>
<div class="a" style="left:922.8px;top:119.8px;width:0.8px;height:15.7px;background:#e2e2e2"></div>
<div class="t" style="left:858px;top:123.8px;width:65.2px;text-align:center;font-size:8.6px;color:#7a7a7a">J</div>
<div class="a" style="left:1099.6px;top:119.8px;width:0.8px;height:15.7px;background:#e2e2e2"></div>
<div class="a" style="left:0;top:135.5px;width:19px;height:461px;background:#fbfbfb"></div>
<div class="a" style="left:18.3px;top:119.8px;width:0.9px;height:476px;background:#cfcfcf"></div>
<div class="t" style="left:0;top:139.1px;width:19px;text-align:center;font-size:8.5px;color:#555">1</div>
<div class="a" style="left:0;top:149.57px;width:18.5px;height:0.8px;background:#ececec"></div>
<div class="t" style="left:0;top:153.57px;width:19px;text-align:center;font-size:8.5px;color:#555">2</div>
<div class="a" style="left:0;top:164.04px;width:18.5px;height:0.8px;background:#ececec"></div>
<div class="t" style="left:0;top:168.04px;width:19px;text-align:center;font-size:8.5px;color:#555">3</div>
<div class="a" style="left:0;top:178.51px;width:18.5px;height:0.8px;background:#ececec"></div>
<div class="t" style="left:0;top:182.51px;width:19px;text-align:center;font-size:8.5px;color:#555">4</div>
<div class="a" style="left:0;top:192.98px;width:18.5px;height:0.8px;background:#ececec"></div>
<div class="t" style="left:0;top:196.98px;width:19px;text-align:center;font-size:8.5px;color:#555">5</div>
<div class="a" style="left:0;top:207.45px;width:18.5px;height:0.8px;background:#ececec"></div>
<div class="t" style="left:0;top:211.45px;width:19px;text-align:center;font-size:8.5px;color:#555">6</div>
<div class="a" style="left:0;top:221.92px;width:18.5px;height:0.8px;background:#ececec"></div>
<div class="t" style="left:0;top:225.92px;width:19px;text-align:center;font-size:8.5px;color:#555">7</div>
<div class="a" style="left:0;top:236.39px;width:18.5px;height:0.8px;background:#ececec"></div>
<div class="t" style="left:0;top:240.39px;width:19px;text-align:center;font-size:8.5px;color:#555">8</div>
<div class="a" style="left:0;top:250.86px;width:18.5px;height:0.8px;background:#ececec"></div>
<div class="t" style="left:0;top:254.86px;width:19px;text-align:center;font-size:8.5px;color:#555">9</div>
<div class="a" style="left:0;top:265.33px;width:18.5px;height:0.8px;background:#ececec"></div>
<div class="t" style="left:0;top:269.33px;width:19px;text-align:center;font-size:8.5px;color:#555">10</div>
<div class="a" style="left:0;top:279.8px;width:18.5px;height:0.8px;background:#ececec"></div>
<div class="t" style="left:0;top:283.8px;width:19px;text-align:center;font-size:8.5px;color:#555">11</div>
<div class="a" style="left:0;top:294.27px;width:18.5px;height:0.8px;background:#ececec"></div>
<div class="t" style="left:0;top:298.27px;width:19px;text-align:center;font-size:8.5px;color:#555">12</div>
<div class="a" style="left:0;top:308.74px;width:18.5px;height:0.8px;background:#ececec"></div>
<div class="t" style="left:0;top:312.74px;width:19px;text-align:center;font-size:8.5px;color:#555">13</div>
<div class="a" style="left:0;top:323.21px;width:18.5px;height:0.8px;background:#ececec"></div>
<div class="t" style="left:0;top:327.21px;width:19px;text-align:center;font-size:8.5px;color:#555">14</div>
<div class="a" style="left:0;top:337.68px;width:18.5px;height:0.8px;background:#ececec"></div>
<div class="t" style="left:0;top:341.68px;width:19px;text-align:center;font-size:8.5px;color:#555">15</div>
<div class="a" style="left:0;top:352.15px;width:18.5px;height:0.8px;background:#ececec"></div>
<div class="t" style="left:0;top:356.15px;width:19px;text-align:center;font-size:8.5px;color:#3f7a52">16</div>
<div class="a" style="left:0;top:366.62px;width:18.5px;height:0.8px;background:#ececec"></div>
<div class="t" style="left:0;top:370.62px;width:19px;text-align:center;font-size:8.5px;color:#555">17</div>
<div class="a" style="left:0;top:381.09px;width:18.5px;height:0.8px;background:#ececec"></div>
<div class="t" style="left:0;top:385.09px;width:19px;text-align:center;font-size:8.5px;color:#555">18</div>
<div class="a" style="left:0;top:395.56px;width:18.5px;height:0.8px;background:#ececec"></div>
<div class="t" style="left:0;top:399.56px;width:19px;text-align:center;font-size:8.5px;color:#555">19</div>
<div class="a" style="left:0;top:410.03px;width:18.5px;height:0.8px;background:#ececec"></div>
<div class="t" style="left:0;top:414.03px;width:19px;text-align:center;font-size:8.5px;color:#555">20</div>
<div class="a" style="left:0;top:424.5px;width:18.5px;height:0.8px;background:#ececec"></div>
<div class="t" style="left:0;top:428.5px;width:19px;text-align:center;font-size:8.5px;color:#555">21</div>
<div class="a" style="left:0;top:438.97px;width:18.5px;height:0.8px;background:#ececec"></div>
<div class="t" style="left:0;top:442.97px;width:19px;text-align:center;font-size:8.5px;color:#555">22</div>
<div class="a" style="left:0;top:453.44px;width:18.5px;height:0.8px;background:#ececec"></div>
<div class="t" style="left:0;top:457.44px;width:19px;text-align:center;font-size:8.5px;color:#555">23</div>
<div class="a" style="left:0;top:467.91px;width:18.5px;height:0.8px;background:#ececec"></div>
<div class="t" style="left:0;top:471.91px;width:19px;text-align:center;font-size:8.5px;color:#555">24</div>
<div class="a" style="left:0;top:482.38px;width:18.5px;height:0.8px;background:#ececec"></div>
<div class="t" style="left:0;top:486.38px;width:19px;text-align:center;font-size:8.5px;color:#555">25</div>
<div class="a" style="left:0;top:496.85px;width:18.5px;height:0.8px;background:#ececec"></div>
<div class="t" style="left:0;top:500.85px;width:19px;text-align:center;font-size:8.5px;color:#555">26</div>
<div class="a" style="left:0;top:511.32px;width:18.5px;height:0.8px;background:#ececec"></div>
<div class="t" style="left:0;top:515.32px;width:19px;text-align:center;font-size:8.5px;color:#555">27</div>
<div class="a" style="left:0;top:525.79px;width:18.5px;height:0.8px;background:#ececec"></div>
<div class="t" style="left:0;top:529.79px;width:19px;text-align:center;font-size:8.5px;color:#555">28</div>
<div class="a" style="left:0;top:540.26px;width:18.5px;height:0.8px;background:#ececec"></div>
<div class="t" style="left:0;top:544.26px;width:19px;text-align:center;font-size:8.5px;color:#555">29</div>
<div class="a" style="left:0;top:554.73px;width:18.5px;height:0.8px;background:#ececec"></div>
<div class="t" style="left:0;top:558.73px;width:19px;text-align:center;font-size:8.5px;color:#555">30</div>
<div class="a" style="left:0;top:569.2px;width:18.5px;height:0.8px;background:#ececec"></div>
<div class="t" style="left:0;top:573.2px;width:19px;text-align:center;font-size:8.5px;color:#555">31</div>
<div class="a" style="left:0;top:583.67px;width:18.5px;height:0.8px;background:#ececec"></div>
<div class="t" style="left:0;top:587.67px;width:19px;text-align:center;font-size:8.5px;color:#555">32</div>
<div class="a" style="left:0;top:598.14px;width:18.5px;height:0.8px;background:#ececec"></div>
<div class="a" style="left:17px;top:352.55px;width:2px;height:14.47px;background:#3f7a52"></div>
<div class="a" style="left:19.2px;top:135.5px;width:1005px;height:13.47px;background:#77a553"></div>
<div class="a" style="left:19.2px;top:148.77px;width:1005px;height:1.2px;background:#6c9b50"></div>
<div class="t" style="left:20.5px;top:138.7px;font-size:8.9px;font-weight:bold;color:#eaf5e0;letter-spacing:0.25px;">Start Time</div>
<div class="a" style="left:70.9px;top:137.4px;width:11.1px;height:10.5px;background:#fff;box-shadow:0 0 0 0.9px #56843f"></div>
<svg class="a" style="left:70.9px;top:137.4px" width="11" height="11" viewBox="0 0 11 11"><path d="M2.7 3.1 H8.2 L5.45 7.4 Z" fill="#66597e"/></svg>
<div class="t" style="left:84.3px;top:138.7px;font-size:8.9px;font-weight:bold;color:#eaf5e0;">End Time</div>
<div class="a" style="left:129.5px;top:137.4px;width:11.1px;height:10.5px;background:#fff;box-shadow:0 0 0 0.9px #56843f"></div>
<svg class="a" style="left:129.5px;top:137.4px" width="11" height="11" viewBox="0 0 11 11"><path d="M2.7 3.1 H8.2 L5.45 7.4 Z" fill="#66597e"/></svg>
<div class="t" style="left:142.9px;top:138.7px;font-size:8.9px;font-weight:bold;color:#eaf5e0;">Duration in Seconds</div>
<div class="a" style="left:235.4px;top:137.4px;width:11.1px;height:10.5px;background:#fff;box-shadow:0 0 0 0.9px #56843f"></div>
<svg class="a" style="left:235.4px;top:137.4px" width="11" height="11" viewBox="0 0 11 11"><path d="M2.7 3.1 H8.2 L5.45 7.4 Z" fill="#66597e"/></svg>
<div class="t" style="left:248.8px;top:138.7px;font-size:8.9px;font-weight:bold;color:#eaf5e0;">Form Title</div>
<div class="a" style="left:360.4px;top:137.4px;width:11.1px;height:10.5px;background:#fff;box-shadow:0 0 0 0.9px #56843f"></div>
<svg class="a" style="left:360.4px;top:137.4px" width="11" height="11" viewBox="0 0 11 11"><path d="M2.7 3.1 H8.2 L5.45 7.4 Z" fill="#66597e"/></svg>
<div class="t" style="left:374.9px;top:138.7px;font-size:8.9px;font-weight:bold;color:#eaf5e0;">Moment Name</div>
<div class="a" style="left:442.5px;top:137.4px;width:11.1px;height:10.5px;background:#fff;box-shadow:0 0 0 0.9px #56843f"></div>
<svg class="a" style="left:442.5px;top:137.4px" width="11" height="11" viewBox="0 0 11 11"><path d="M2.7 3.1 H8.2 L5.45 7.4 Z" fill="#66597e"/></svg>
<div class="t" style="left:455.9px;top:138.7px;font-size:8.9px;font-weight:bold;color:#eaf5e0;">User</div>
<div class="a" style="left:527.5px;top:137.4px;width:11.1px;height:10.5px;background:#fff;box-shadow:0 0 0 0.9px #56843f"></div>
<svg class="a" style="left:527.5px;top:137.4px" width="11" height="11" viewBox="0 0 11 11"><path d="M2.7 3.1 H8.2 L5.45 7.4 Z" fill="#66597e"/></svg>
<div class="t" style="left:540.9px;top:138.7px;font-size:8.9px;font-weight:bold;color:#eaf5e0;">Moment Sequence</div>
<div class="a" style="left:627.4px;top:137.4px;width:11.1px;height:10.5px;background:#fff;box-shadow:0 0 0 0.9px #56843f"></div>
<svg class="a" style="left:627.4px;top:137.4px" width="11" height="11" viewBox="0 0 11 11"><path d="M2.7 3.1 H8.2 L5.45 7.4 Z" fill="#66597e"/></svg>
<div class="t" style="left:640.8px;top:138.7px;font-size:8.9px;font-weight:bold;color:#eaf5e0;">Number of Tags</div>
<div class="a" style="left:715px;top:137.4px;width:11.1px;height:10.5px;background:#fff;box-shadow:0 0 0 0.9px #56843f"></div>
<svg class="a" style="left:715px;top:137.4px" width="11" height="11" viewBox="0 0 11 11"><path d="M2.7 3.1 H8.2 L5.45 7.4 Z" fill="#66597e"/></svg>
<div class="t" style="left:728.4px;top:138.7px;font-size:8.9px;font-weight:bold;color:#eaf5e0;">Global Moment Sequence</div>
<div class="a" style="left:846.1px;top:137.4px;width:11.1px;height:10.5px;background:#fff;box-shadow:0 0 0 0.9px #56843f"></div>
<svg class="a" style="left:846.1px;top:137.4px" width="11" height="11" viewBox="0 0 11 11"><path d="M2.7 3.1 H8.2 L5.45 7.4 Z" fill="#66597e"/></svg>
<div class="t" style="left:859.5px;top:138.7px;font-size:8.9px;font-weight:bold;color:#eaf5e0;">Comments</div>
<div class="a" style="left:911.3px;top:137.4px;width:11.1px;height:10.5px;background:#fff;box-shadow:0 0 0 0.9px #56843f"></div>
<svg class="a" style="left:911.3px;top:137.4px" width="11" height="11" viewBox="0 0 11 11"><path d="M2.7 3.1 H8.2 L5.45 7.4 Z" fill="#66597e"/></svg>
<div class="t" style="left:924.7px;top:138.7px;font-size:8.9px;font-weight:bold;color:#eaf5e0;">Tags</div>
<div class="a" style="left:19.2px;top:149.97px;width:1005px;height:14.47px;background:#e2ecd9"></div>
<div class="a" style="left:19.2px;top:164.09px;width:1005px;height:0.9px;background:#c9d6c1"></div>
<div class="t" style="left:19px;top:153.67px;width:61.4px;text-align:right;font-size:8.9px;color:#333">0:00:00</div>
<div class="t" style="left:82.8px;top:153.67px;width:56.2px;text-align:right;font-size:8.9px;color:#333">0:00:00</div>
<div class="t" style="left:141.4px;top:153.67px;width:103.5px;text-align:right;font-size:8.9px;color:#333">0</div>
<div class="t" style="left:249px;top:153.17px;font-size:8.9px;color:#333;letter-spacing:-0.3px">バスケットボール シュート2</div>
<div class="t" style="left:375.2px;top:153.17px;font-size:8.9px;color:#333;letter-spacing:-0.3px">Bチーム シュート</div>
<div class="t" style="left:539.4px;top:153.67px;width:97.5px;text-align:right;font-size:8.9px;color:#333">1</div>
<div class="t" style="left:639.3px;top:153.67px;width:85.2px;text-align:right;font-size:8.9px;color:#333">1</div>
<div class="t" style="left:726.9px;top:153.67px;width:128.7px;text-align:right;font-size:8.9px;color:#333">1</div>
<div class="t" style="left:924.9px;top:153.17px;font-size:8.9px;color:#333;letter-spacing:0.1px">2P</div>
<div class="a" style="left:19.2px;top:164.44px;width:1005px;height:14.47px;background:#ffffff"></div>
<div class="a" style="left:19.2px;top:178.56px;width:1005px;height:0.9px;background:#c9d6c1"></div>
<div class="a" style="left:82.4px;top:164.44px;width:0.8px;height:13.97px;background:#e6e6e6"></div>
<div class="a" style="left:141px;top:164.44px;width:0.8px;height:13.97px;background:#e6e6e6"></div>
<div class="a" style="left:246.9px;top:164.44px;width:0.8px;height:13.97px;background:#e6e6e6"></div>
<div class="a" style="left:539px;top:164.44px;width:0.8px;height:13.97px;background:#e6e6e6"></div>
<div class="a" style="left:638.9px;top:164.44px;width:0.8px;height:13.97px;background:#e6e6e6"></div>
<div class="a" style="left:726.5px;top:164.44px;width:0.8px;height:13.97px;background:#e6e6e6"></div>
<div class="a" style="left:857.6px;top:164.44px;width:0.8px;height:13.97px;background:#e6e6e6"></div>
<div class="a" style="left:922.8px;top:164.44px;width:0.8px;height:13.97px;background:#e6e6e6"></div>
<div class="a" style="left:1099.6px;top:164.44px;width:0.8px;height:13.97px;background:#e6e6e6"></div>
<div class="a" style="left:371.9px;top:164.44px;width:0.8px;height:13.97px;background:#e6e6e6"></div>
<div class="a" style="left:454px;top:164.44px;width:0.8px;height:13.97px;background:#e6e6e6"></div>
<div class="t" style="left:19px;top:168.14px;width:61.4px;text-align:right;font-size:8.9px;color:#333">0:00:00</div>
<div class="t" style="left:82.8px;top:168.14px;width:56.2px;text-align:right;font-size:8.9px;color:#333">0:00:00</div>
<div class="t" style="left:141.4px;top:168.14px;width:103.5px;text-align:right;font-size:8.9px;color:#333">0</div>
<div class="t" style="left:249px;top:167.64px;font-size:8.9px;color:#333;letter-spacing:-0.3px">バスケットボール シュート2</div>
<div class="t" style="left:375.2px;top:167.64px;font-size:8.9px;color:#333;letter-spacing:-0.3px">Aチーム シュート</div>
<div class="t" style="left:539.4px;top:168.14px;width:97.5px;text-align:right;font-size:8.9px;color:#333">1</div>
<div class="t" style="left:639.3px;top:168.14px;width:85.2px;text-align:right;font-size:8.9px;color:#333">6</div>
<div class="t" style="left:726.9px;top:168.14px;width:128.7px;text-align:right;font-size:8.9px;color:#333">2</div>
<div class="t" style="left:924.9px;top:167.64px;font-size:8.9px;color:#333;letter-spacing:0.1px">2P, 3P, 失敗, 失敗, 2P, 3P</div>
<div class="a" style="left:19.2px;top:178.91px;width:1005px;height:14.47px;background:#e2ecd9"></div>
<div class="a" style="left:19.2px;top:193.03px;width:1005px;height:0.9px;background:#c9d6c1"></div>
<div class="t" style="left:19px;top:182.61px;width:61.4px;text-align:right;font-size:8.9px;color:#333">0:00:00</div>
<div class="t" style="left:82.8px;top:182.61px;width:56.2px;text-align:right;font-size:8.9px;color:#333">0:00:00</div>
<div class="t" style="left:141.4px;top:182.61px;width:103.5px;text-align:right;font-size:8.9px;color:#333">0</div>
<div class="t" style="left:249px;top:182.11px;font-size:8.9px;color:#333;letter-spacing:-0.3px">バスケットボール シュート2</div>
<div class="t" style="left:375.2px;top:182.11px;font-size:8.9px;color:#333;letter-spacing:-0.3px">Bチーム シュート</div>
<div class="t" style="left:539.4px;top:182.61px;width:97.5px;text-align:right;font-size:8.9px;color:#333">2</div>
<div class="t" style="left:639.3px;top:182.61px;width:85.2px;text-align:right;font-size:8.9px;color:#333">0</div>
<div class="t" style="left:726.9px;top:182.61px;width:128.7px;text-align:right;font-size:8.9px;color:#333">3</div>
<div class="t" style="left:924.9px;top:182.11px;font-size:8.9px;color:#333;letter-spacing:0.1px"></div>
<div class="a" style="left:19.2px;top:193.38px;width:1005px;height:14.47px;background:#ffffff"></div>
<div class="a" style="left:19.2px;top:207.5px;width:1005px;height:0.9px;background:#c9d6c1"></div>
<div class="a" style="left:82.4px;top:193.38px;width:0.8px;height:13.97px;background:#e6e6e6"></div>
<div class="a" style="left:141px;top:193.38px;width:0.8px;height:13.97px;background:#e6e6e6"></div>
<div class="a" style="left:246.9px;top:193.38px;width:0.8px;height:13.97px;background:#e6e6e6"></div>
<div class="a" style="left:539px;top:193.38px;width:0.8px;height:13.97px;background:#e6e6e6"></div>
<div class="a" style="left:638.9px;top:193.38px;width:0.8px;height:13.97px;background:#e6e6e6"></div>
<div class="a" style="left:726.5px;top:193.38px;width:0.8px;height:13.97px;background:#e6e6e6"></div>
<div class="a" style="left:857.6px;top:193.38px;width:0.8px;height:13.97px;background:#e6e6e6"></div>
<div class="a" style="left:922.8px;top:193.38px;width:0.8px;height:13.97px;background:#e6e6e6"></div>
<div class="a" style="left:1099.6px;top:193.38px;width:0.8px;height:13.97px;background:#e6e6e6"></div>
<div class="a" style="left:371.9px;top:193.38px;width:0.8px;height:13.97px;background:#e6e6e6"></div>
<div class="a" style="left:454px;top:193.38px;width:0.8px;height:13.97px;background:#e6e6e6"></div>
<div class="t" style="left:19px;top:197.08px;width:61.4px;text-align:right;font-size:8.9px;color:#333">0:00:00</div>
<div class="t" style="left:82.8px;top:197.08px;width:56.2px;text-align:right;font-size:8.9px;color:#333">0:00:00</div>
<div class="t" style="left:141.4px;top:197.08px;width:103.5px;text-align:right;font-size:8.9px;color:#333">0</div>
<div class="t" style="left:249px;top:196.58px;font-size:8.9px;color:#333;letter-spacing:-0.3px">バスケットボール シュート2</div>
<div class="t" style="left:375.2px;top:196.58px;font-size:8.9px;color:#333;letter-spacing:-0.3px">Aチーム シュート</div>
<div class="t" style="left:539.4px;top:197.08px;width:97.5px;text-align:right;font-size:8.9px;color:#333">2</div>
<div class="t" style="left:639.3px;top:197.08px;width:85.2px;text-align:right;font-size:8.9px;color:#333">0</div>
<div class="t" style="left:726.9px;top:197.08px;width:128.7px;text-align:right;font-size:8.9px;color:#333">4</div>
<div class="t" style="left:924.9px;top:196.58px;font-size:8.9px;color:#333;letter-spacing:0.1px"></div>
<div class="a" style="left:19.2px;top:207.85px;width:1005px;height:14.47px;background:#e2ecd9"></div>
<div class="a" style="left:19.2px;top:221.97px;width:1005px;height:0.9px;background:#c9d6c1"></div>
<div class="t" style="left:19px;top:211.55px;width:61.4px;text-align:right;font-size:8.9px;color:#333">0:00:27</div>
<div class="t" style="left:82.8px;top:211.55px;width:56.2px;text-align:right;font-size:8.9px;color:#333">0:00:27</div>
<div class="t" style="left:141.4px;top:211.55px;width:103.5px;text-align:right;font-size:8.9px;color:#333">0</div>
<div class="t" style="left:249px;top:211.05px;font-size:8.9px;color:#333;letter-spacing:-0.3px">バスケットボール シュート2</div>
<div class="t" style="left:375.2px;top:211.05px;font-size:8.9px;color:#333;letter-spacing:-0.3px">Bチーム シュート</div>
<div class="t" style="left:539.4px;top:211.55px;width:97.5px;text-align:right;font-size:8.9px;color:#333">3</div>
<div class="t" style="left:639.3px;top:211.55px;width:85.2px;text-align:right;font-size:8.9px;color:#333">0</div>
<div class="t" style="left:726.9px;top:211.55px;width:128.7px;text-align:right;font-size:8.9px;color:#333">5</div>
<div class="t" style="left:924.9px;top:211.05px;font-size:8.9px;color:#333;letter-spacing:0.1px"></div>
<div class="a" style="left:19.2px;top:222.32px;width:1005px;height:14.47px;background:#ffffff"></div>
<div class="a" style="left:19.2px;top:236.44px;width:1005px;height:0.9px;background:#c9d6c1"></div>
<div class="a" style="left:82.4px;top:222.32px;width:0.8px;height:13.97px;background:#e6e6e6"></div>
<div class="a" style="left:141px;top:222.32px;width:0.8px;height:13.97px;background:#e6e6e6"></div>
<div class="a" style="left:246.9px;top:222.32px;width:0.8px;height:13.97px;background:#e6e6e6"></div>
<div class="a" style="left:539px;top:222.32px;width:0.8px;height:13.97px;background:#e6e6e6"></div>
<div class="a" style="left:638.9px;top:222.32px;width:0.8px;height:13.97px;background:#e6e6e6"></div>
<div class="a" style="left:726.5px;top:222.32px;width:0.8px;height:13.97px;background:#e6e6e6"></div>
<div class="a" style="left:857.6px;top:222.32px;width:0.8px;height:13.97px;background:#e6e6e6"></div>
<div class="a" style="left:922.8px;top:222.32px;width:0.8px;height:13.97px;background:#e6e6e6"></div>
<div class="a" style="left:1099.6px;top:222.32px;width:0.8px;height:13.97px;background:#e6e6e6"></div>
<div class="a" style="left:371.9px;top:222.32px;width:0.8px;height:13.97px;background:#e6e6e6"></div>
<div class="a" style="left:454px;top:222.32px;width:0.8px;height:13.97px;background:#e6e6e6"></div>
<div class="t" style="left:19px;top:226.02px;width:61.4px;text-align:right;font-size:8.9px;color:#333">0:00:35</div>
<div class="t" style="left:82.8px;top:226.02px;width:56.2px;text-align:right;font-size:8.9px;color:#333">0:00:37</div>
<div class="t" style="left:141.4px;top:226.02px;width:103.5px;text-align:right;font-size:8.9px;color:#333">2.387346</div>
<div class="t" style="left:249px;top:225.52px;font-size:8.9px;color:#333;letter-spacing:-0.3px">バスケットボール シュート2</div>
<div class="t" style="left:375.2px;top:225.52px;font-size:8.9px;color:#333;letter-spacing:-0.3px">Aチーム シュート</div>
<div class="t" style="left:539.4px;top:226.02px;width:97.5px;text-align:right;font-size:8.9px;color:#333">3</div>
<div class="t" style="left:639.3px;top:226.02px;width:85.2px;text-align:right;font-size:8.9px;color:#333">0</div>
<div class="t" style="left:726.9px;top:226.02px;width:128.7px;text-align:right;font-size:8.9px;color:#333">6</div>
<div class="t" style="left:924.9px;top:225.52px;font-size:8.9px;color:#333;letter-spacing:0.1px"></div>
<div class="a" style="left:19.2px;top:236.79px;width:1005px;height:14.47px;background:#e2ecd9"></div>
<div class="a" style="left:19.2px;top:250.91px;width:1005px;height:0.9px;background:#c9d6c1"></div>
<div class="t" style="left:19px;top:240.49px;width:61.4px;text-align:right;font-size:8.9px;color:#333">0:00:37</div>
<div class="t" style="left:82.8px;top:240.49px;width:56.2px;text-align:right;font-size:8.9px;color:#333">0:00:50</div>
<div class="t" style="left:141.4px;top:240.49px;width:103.5px;text-align:right;font-size:8.9px;color:#333">12.49833</div>
<div class="t" style="left:249px;top:239.99px;font-size:8.9px;color:#333;letter-spacing:-0.3px">バスケットボール シュート2</div>
<div class="t" style="left:375.2px;top:239.99px;font-size:8.9px;color:#333;letter-spacing:-0.3px">Aチーム シュート</div>
<div class="t" style="left:539.4px;top:240.49px;width:97.5px;text-align:right;font-size:8.9px;color:#333">4</div>
<div class="t" style="left:639.3px;top:240.49px;width:85.2px;text-align:right;font-size:8.9px;color:#333">3</div>
<div class="t" style="left:726.9px;top:240.49px;width:128.7px;text-align:right;font-size:8.9px;color:#333">7</div>
<div class="t" style="left:924.9px;top:239.99px;font-size:8.9px;color:#333;letter-spacing:0.1px">2P, 2P, 成功</div>
<div class="a" style="left:19.2px;top:251.26px;width:1005px;height:14.47px;background:#ffffff"></div>
<div class="a" style="left:19.2px;top:265.38px;width:1005px;height:0.9px;background:#c9d6c1"></div>
<div class="a" style="left:82.4px;top:251.26px;width:0.8px;height:13.97px;background:#e6e6e6"></div>
<div class="a" style="left:141px;top:251.26px;width:0.8px;height:13.97px;background:#e6e6e6"></div>
<div class="a" style="left:246.9px;top:251.26px;width:0.8px;height:13.97px;background:#e6e6e6"></div>
<div class="a" style="left:539px;top:251.26px;width:0.8px;height:13.97px;background:#e6e6e6"></div>
<div class="a" style="left:638.9px;top:251.26px;width:0.8px;height:13.97px;background:#e6e6e6"></div>
<div class="a" style="left:726.5px;top:251.26px;width:0.8px;height:13.97px;background:#e6e6e6"></div>
<div class="a" style="left:857.6px;top:251.26px;width:0.8px;height:13.97px;background:#e6e6e6"></div>
<div class="a" style="left:922.8px;top:251.26px;width:0.8px;height:13.97px;background:#e6e6e6"></div>
<div class="a" style="left:1099.6px;top:251.26px;width:0.8px;height:13.97px;background:#e6e6e6"></div>
<div class="a" style="left:371.9px;top:251.26px;width:0.8px;height:13.97px;background:#e6e6e6"></div>
<div class="a" style="left:454px;top:251.26px;width:0.8px;height:13.97px;background:#e6e6e6"></div>
<div class="t" style="left:19px;top:254.96px;width:61.4px;text-align:right;font-size:8.9px;color:#333">0:00:37</div>
<div class="t" style="left:82.8px;top:254.96px;width:56.2px;text-align:right;font-size:8.9px;color:#333">0:00:50</div>
<div class="t" style="left:141.4px;top:254.96px;width:103.5px;text-align:right;font-size:8.9px;color:#333">12.49833</div>
<div class="t" style="left:249px;top:254.46px;font-size:8.9px;color:#333;letter-spacing:-0.3px">バスケットボール シュート2</div>
<div class="t" style="left:375.2px;top:254.46px;font-size:8.9px;color:#333;letter-spacing:-0.3px">Aチーム シュート</div>
<div class="t" style="left:539.4px;top:254.96px;width:97.5px;text-align:right;font-size:8.9px;color:#333">5</div>
<div class="t" style="left:639.3px;top:254.96px;width:85.2px;text-align:right;font-size:8.9px;color:#333">5</div>
<div class="t" style="left:726.9px;top:254.96px;width:128.7px;text-align:right;font-size:8.9px;color:#333">8</div>
<div class="t" style="left:924.9px;top:254.46px;font-size:8.9px;color:#333;letter-spacing:0.1px">2P, 成功, 2P, 2P, 成功</div>
<div class="a" style="left:19.2px;top:265.73px;width:1005px;height:14.47px;background:#e2ecd9"></div>
<div class="a" style="left:19.2px;top:279.85px;width:1005px;height:0.9px;background:#c9d6c1"></div>
<div class="t" style="left:19px;top:269.43px;width:61.4px;text-align:right;font-size:8.9px;color:#333">0:00:39</div>
<div class="t" style="left:82.8px;top:269.43px;width:56.2px;text-align:right;font-size:8.9px;color:#333">0:01:06</div>
<div class="t" style="left:141.4px;top:269.43px;width:103.5px;text-align:right;font-size:8.9px;color:#333">27.543669</div>
<div class="t" style="left:249px;top:268.93px;font-size:8.9px;color:#333;letter-spacing:-0.3px">バスケットボール シュート2</div>
<div class="t" style="left:375.2px;top:268.93px;font-size:8.9px;color:#333;letter-spacing:-0.3px">Aチーム シュート</div>
<div class="t" style="left:539.4px;top:269.43px;width:97.5px;text-align:right;font-size:8.9px;color:#333">6</div>
<div class="t" style="left:639.3px;top:269.43px;width:85.2px;text-align:right;font-size:8.9px;color:#333">4</div>
<div class="t" style="left:726.9px;top:269.43px;width:128.7px;text-align:right;font-size:8.9px;color:#333">9</div>
<div class="t" style="left:924.9px;top:268.93px;font-size:8.9px;color:#333;letter-spacing:0.1px">2P, 成功, 2P, 成功</div>
<div class="a" style="left:19.2px;top:280.2px;width:1005px;height:14.47px;background:#ffffff"></div>
<div class="a" style="left:19.2px;top:294.32px;width:1005px;height:0.9px;background:#c9d6c1"></div>
<div class="a" style="left:82.4px;top:280.2px;width:0.8px;height:13.97px;background:#e6e6e6"></div>
<div class="a" style="left:141px;top:280.2px;width:0.8px;height:13.97px;background:#e6e6e6"></div>
<div class="a" style="left:246.9px;top:280.2px;width:0.8px;height:13.97px;background:#e6e6e6"></div>
<div class="a" style="left:539px;top:280.2px;width:0.8px;height:13.97px;background:#e6e6e6"></div>
<div class="a" style="left:638.9px;top:280.2px;width:0.8px;height:13.97px;background:#e6e6e6"></div>
<div class="a" style="left:726.5px;top:280.2px;width:0.8px;height:13.97px;background:#e6e6e6"></div>
<div class="a" style="left:857.6px;top:280.2px;width:0.8px;height:13.97px;background:#e6e6e6"></div>
<div class="a" style="left:922.8px;top:280.2px;width:0.8px;height:13.97px;background:#e6e6e6"></div>
<div class="a" style="left:1099.6px;top:280.2px;width:0.8px;height:13.97px;background:#e6e6e6"></div>
<div class="a" style="left:371.9px;top:280.2px;width:0.8px;height:13.97px;background:#e6e6e6"></div>
<div class="a" style="left:454px;top:280.2px;width:0.8px;height:13.97px;background:#e6e6e6"></div>
<div class="t" style="left:19px;top:283.9px;width:61.4px;text-align:right;font-size:8.9px;color:#333">0:00:42</div>
<div class="t" style="left:82.8px;top:283.9px;width:56.2px;text-align:right;font-size:8.9px;color:#333">0:01:50</div>
<div class="t" style="left:141.4px;top:283.9px;width:103.5px;text-align:right;font-size:8.9px;color:#333">68.588981</div>
<div class="t" style="left:249px;top:283.4px;font-size:8.9px;color:#333;letter-spacing:-0.3px">バスケットボール シュート2</div>
<div class="t" style="left:375.2px;top:283.4px;font-size:8.9px;color:#333;letter-spacing:-0.3px">Aチーム シュート</div>
<div class="t" style="left:539.4px;top:283.9px;width:97.5px;text-align:right;font-size:8.9px;color:#333">7</div>
<div class="t" style="left:639.3px;top:283.9px;width:85.2px;text-align:right;font-size:8.9px;color:#333">12</div>
<div class="t" style="left:726.9px;top:283.9px;width:128.7px;text-align:right;font-size:8.9px;color:#333">10</div>
<div class="t" style="left:924.9px;top:283.4px;font-size:8.9px;color:#333;letter-spacing:0.1px">2P, 成功, 2P, 失敗, 2P, 2P</div>
<div class="a" style="left:19.2px;top:294.67px;width:1005px;height:14.47px;background:#e2ecd9"></div>
<div class="a" style="left:19.2px;top:308.79px;width:1005px;height:0.9px;background:#c9d6c1"></div>
<div class="t" style="left:19px;top:298.37px;width:61.4px;text-align:right;font-size:8.9px;color:#333">0:00:44</div>
<div class="t" style="left:82.8px;top:298.37px;width:56.2px;text-align:right;font-size:8.9px;color:#333">0:00:47</div>
<div class="t" style="left:141.4px;top:298.37px;width:103.5px;text-align:right;font-size:8.9px;color:#333">3</div>
<div class="t" style="left:249px;top:297.87px;font-size:8.9px;color:#333;letter-spacing:-0.3px">バスケットボール シュート</div>
<div class="t" style="left:375.2px;top:297.87px;font-size:8.9px;color:#333;letter-spacing:-0.3px">日本 シュート</div>
<div class="t" style="left:539.4px;top:298.37px;width:97.5px;text-align:right;font-size:8.9px;color:#333">1</div>
<div class="t" style="left:639.3px;top:298.37px;width:85.2px;text-align:right;font-size:8.9px;color:#333">2</div>
<div class="t" style="left:726.9px;top:298.37px;width:128.7px;text-align:right;font-size:8.9px;color:#333">11</div>
<div class="t" style="left:924.9px;top:297.87px;font-size:8.9px;color:#333;letter-spacing:0.1px">2P, 成功</div>
<div class="a" style="left:19.2px;top:309.14px;width:1005px;height:14.47px;background:#ffffff"></div>
<div class="a" style="left:19.2px;top:323.26px;width:1005px;height:0.9px;background:#c9d6c1"></div>
<div class="a" style="left:82.4px;top:309.14px;width:0.8px;height:13.97px;background:#e6e6e6"></div>
<div class="a" style="left:141px;top:309.14px;width:0.8px;height:13.97px;background:#e6e6e6"></div>
<div class="a" style="left:246.9px;top:309.14px;width:0.8px;height:13.97px;background:#e6e6e6"></div>
<div class="a" style="left:539px;top:309.14px;width:0.8px;height:13.97px;background:#e6e6e6"></div>
<div class="a" style="left:638.9px;top:309.14px;width:0.8px;height:13.97px;background:#e6e6e6"></div>
<div class="a" style="left:726.5px;top:309.14px;width:0.8px;height:13.97px;background:#e6e6e6"></div>
<div class="a" style="left:857.6px;top:309.14px;width:0.8px;height:13.97px;background:#e6e6e6"></div>
<div class="a" style="left:922.8px;top:309.14px;width:0.8px;height:13.97px;background:#e6e6e6"></div>
<div class="a" style="left:1099.6px;top:309.14px;width:0.8px;height:13.97px;background:#e6e6e6"></div>
<div class="a" style="left:371.9px;top:309.14px;width:0.8px;height:13.97px;background:#e6e6e6"></div>
<div class="a" style="left:454px;top:309.14px;width:0.8px;height:13.97px;background:#e6e6e6"></div>
<div class="t" style="left:19px;top:312.84px;width:61.4px;text-align:right;font-size:8.9px;color:#333">0:00:46</div>
<div class="t" style="left:82.8px;top:312.84px;width:56.2px;text-align:right;font-size:8.9px;color:#333">0:00:51</div>
<div class="t" style="left:141.4px;top:312.84px;width:103.5px;text-align:right;font-size:8.9px;color:#333">5.140089</div>
<div class="t" style="left:249px;top:312.34px;font-size:8.9px;color:#333;letter-spacing:-0.3px">バスケットボール シュート</div>
<div class="t" style="left:375.2px;top:312.34px;font-size:8.9px;color:#333;letter-spacing:-0.3px">日本 シュート</div>
<div class="t" style="left:539.4px;top:312.84px;width:97.5px;text-align:right;font-size:8.9px;color:#333">2</div>
<div class="t" style="left:639.3px;top:312.84px;width:85.2px;text-align:right;font-size:8.9px;color:#333">2</div>
<div class="t" style="left:726.9px;top:312.84px;width:128.7px;text-align:right;font-size:8.9px;color:#333">12</div>
<div class="t" style="left:924.9px;top:312.34px;font-size:8.9px;color:#333;letter-spacing:0.1px">2P, 成功</div>
<div class="a" style="left:19.2px;top:323.61px;width:1005px;height:14.47px;background:#e2ecd9"></div>
<div class="a" style="left:19.2px;top:337.73px;width:1005px;height:0.9px;background:#c9d6c1"></div>
<div class="t" style="left:19px;top:327.31px;width:61.4px;text-align:right;font-size:8.9px;color:#333">0:00:47</div>
<div class="t" style="left:82.8px;top:327.31px;width:56.2px;text-align:right;font-size:8.9px;color:#333">0:00:50</div>
<div class="t" style="left:141.4px;top:327.31px;width:103.5px;text-align:right;font-size:8.9px;color:#333">3</div>
<div class="t" style="left:249px;top:326.81px;font-size:8.9px;color:#333;letter-spacing:-0.3px">バスケットボール シュート</div>
<div class="t" style="left:375.2px;top:326.81px;font-size:8.9px;color:#333;letter-spacing:-0.3px">日本 シュート</div>
<div class="t" style="left:539.4px;top:327.31px;width:97.5px;text-align:right;font-size:8.9px;color:#333">3</div>
<div class="t" style="left:639.3px;top:327.31px;width:85.2px;text-align:right;font-size:8.9px;color:#333">1</div>
<div class="t" style="left:726.9px;top:327.31px;width:128.7px;text-align:right;font-size:8.9px;color:#333">13</div>
<div class="t" style="left:924.9px;top:326.81px;font-size:8.9px;color:#333;letter-spacing:0.1px">成功</div>
<div class="a" style="left:19.2px;top:338.08px;width:1005px;height:14.47px;background:#ffffff"></div>
<div class="a" style="left:19.2px;top:352.2px;width:1005px;height:0.9px;background:#c9d6c1"></div>
<div class="a" style="left:82.4px;top:338.08px;width:0.8px;height:13.97px;background:#e6e6e6"></div>
<div class="a" style="left:141px;top:338.08px;width:0.8px;height:13.97px;background:#e6e6e6"></div>
<div class="a" style="left:246.9px;top:338.08px;width:0.8px;height:13.97px;background:#e6e6e6"></div>
<div class="a" style="left:539px;top:338.08px;width:0.8px;height:13.97px;background:#e6e6e6"></div>
<div class="a" style="left:638.9px;top:338.08px;width:0.8px;height:13.97px;background:#e6e6e6"></div>
<div class="a" style="left:726.5px;top:338.08px;width:0.8px;height:13.97px;background:#e6e6e6"></div>
<div class="a" style="left:857.6px;top:338.08px;width:0.8px;height:13.97px;background:#e6e6e6"></div>
<div class="a" style="left:922.8px;top:338.08px;width:0.8px;height:13.97px;background:#e6e6e6"></div>
<div class="a" style="left:1099.6px;top:338.08px;width:0.8px;height:13.97px;background:#e6e6e6"></div>
<div class="a" style="left:371.9px;top:338.08px;width:0.8px;height:13.97px;background:#e6e6e6"></div>
<div class="a" style="left:454px;top:338.08px;width:0.8px;height:13.97px;background:#e6e6e6"></div>
<div class="t" style="left:19px;top:341.78px;width:61.4px;text-align:right;font-size:8.9px;color:#333">0:00:48</div>
<div class="t" style="left:82.8px;top:341.78px;width:56.2px;text-align:right;font-size:8.9px;color:#333">0:00:51</div>
<div class="t" style="left:141.4px;top:341.78px;width:103.5px;text-align:right;font-size:8.9px;color:#333">2.658665</div>
<div class="t" style="left:249px;top:341.28px;font-size:8.9px;color:#333;letter-spacing:-0.3px">バスケットボール シュート2</div>
<div class="t" style="left:375.2px;top:341.28px;font-size:8.9px;color:#333;letter-spacing:-0.3px">Aチーム シュート</div>
<div class="t" style="left:539.4px;top:341.78px;width:97.5px;text-align:right;font-size:8.9px;color:#333">8</div>
<div class="t" style="left:639.3px;top:341.78px;width:85.2px;text-align:right;font-size:8.9px;color:#333">2</div>
<div class="t" style="left:726.9px;top:341.78px;width:128.7px;text-align:right;font-size:8.9px;color:#333">14</div>
<div class="t" style="left:924.9px;top:341.28px;font-size:8.9px;color:#333;letter-spacing:0.1px">2P, 成功</div>
<div class="a" style="left:19.2px;top:352.55px;width:1005px;height:14.47px;background:#e2ecd9"></div>
<div class="a" style="left:19.2px;top:366.67px;width:1005px;height:0.9px;background:#c9d6c1"></div>
<div class="t" style="left:19px;top:356.25px;width:61.4px;text-align:right;font-size:8.9px;color:#333">0:00:50</div>
<div class="t" style="left:82.8px;top:356.25px;width:56.2px;text-align:right;font-size:8.9px;color:#333">0:00:53</div>
<div class="t" style="left:141.4px;top:356.25px;width:103.5px;text-align:right;font-size:8.9px;color:#333">2.995035</div>
<div class="t" style="left:249px;top:355.75px;font-size:8.9px;color:#333;letter-spacing:-0.3px">バスケットボール シュート2</div>
<div class="t" style="left:375.2px;top:355.75px;font-size:8.9px;color:#333;letter-spacing:-0.3px">Aチーム シュート</div>
<div class="t" style="left:539.4px;top:356.25px;width:97.5px;text-align:right;font-size:8.9px;color:#333">9</div>
<div class="t" style="left:639.3px;top:356.25px;width:85.2px;text-align:right;font-size:8.9px;color:#333">2</div>
<div class="t" style="left:726.9px;top:356.25px;width:128.7px;text-align:right;font-size:8.9px;color:#333">15</div>
<div class="t" style="left:924.9px;top:355.75px;font-size:8.9px;color:#333;letter-spacing:0.1px">2P, 成功</div>
<div class="a" style="left:19.2px;top:367.02px;width:1005px;height:14.47px;background:#ffffff"></div>
<div class="a" style="left:19.2px;top:381.14px;width:1005px;height:0.9px;background:#c9d6c1"></div>
<div class="a" style="left:82.4px;top:367.02px;width:0.8px;height:13.97px;background:#e6e6e6"></div>
<div class="a" style="left:141px;top:367.02px;width:0.8px;height:13.97px;background:#e6e6e6"></div>
<div class="a" style="left:246.9px;top:367.02px;width:0.8px;height:13.97px;background:#e6e6e6"></div>
<div class="a" style="left:539px;top:367.02px;width:0.8px;height:13.97px;background:#e6e6e6"></div>
<div class="a" style="left:638.9px;top:367.02px;width:0.8px;height:13.97px;background:#e6e6e6"></div>
<div class="a" style="left:726.5px;top:367.02px;width:0.8px;height:13.97px;background:#e6e6e6"></div>
<div class="a" style="left:857.6px;top:367.02px;width:0.8px;height:13.97px;background:#e6e6e6"></div>
<div class="a" style="left:922.8px;top:367.02px;width:0.8px;height:13.97px;background:#e6e6e6"></div>
<div class="a" style="left:1099.6px;top:367.02px;width:0.8px;height:13.97px;background:#e6e6e6"></div>
<div class="a" style="left:371.9px;top:367.02px;width:0.8px;height:13.97px;background:#e6e6e6"></div>
<div class="a" style="left:454px;top:367.02px;width:0.8px;height:13.97px;background:#e6e6e6"></div>
<div class="t" style="left:19px;top:370.72px;width:61.4px;text-align:right;font-size:8.9px;color:#333">0:00:57</div>
<div class="t" style="left:82.8px;top:370.72px;width:56.2px;text-align:right;font-size:8.9px;color:#333">0:00:57</div>
<div class="t" style="left:141.4px;top:370.72px;width:103.5px;text-align:right;font-size:8.9px;color:#333">0</div>
<div class="t" style="left:249px;top:370.22px;font-size:8.9px;color:#333;letter-spacing:-0.3px">バスケットボール シュート2</div>
<div class="t" style="left:375.2px;top:370.22px;font-size:8.9px;color:#333;letter-spacing:-0.3px">Bチーム シュート</div>
<div class="t" style="left:539.4px;top:370.72px;width:97.5px;text-align:right;font-size:8.9px;color:#333">4</div>
<div class="t" style="left:639.3px;top:370.72px;width:85.2px;text-align:right;font-size:8.9px;color:#333">1</div>
<div class="t" style="left:726.9px;top:370.72px;width:128.7px;text-align:right;font-size:8.9px;color:#333">16</div>
<div class="t" style="left:924.9px;top:370.22px;font-size:8.9px;color:#333;letter-spacing:0.1px">3P</div>
<div class="a" style="left:19.2px;top:381.49px;width:1005px;height:14.47px;background:#e2ecd9"></div>
<div class="a" style="left:19.2px;top:395.61px;width:1005px;height:0.9px;background:#c9d6c1"></div>
<div class="t" style="left:19px;top:385.19px;width:61.4px;text-align:right;font-size:8.9px;color:#333">0:01:05</div>
<div class="t" style="left:82.8px;top:385.19px;width:56.2px;text-align:right;font-size:8.9px;color:#333">0:01:10</div>
<div class="t" style="left:141.4px;top:385.19px;width:103.5px;text-align:right;font-size:8.9px;color:#333">4.86677</div>
<div class="t" style="left:249px;top:384.69px;font-size:8.9px;color:#333;letter-spacing:-0.3px">バスケットボール シュート</div>
<div class="t" style="left:375.2px;top:384.69px;font-size:8.9px;color:#333;letter-spacing:-0.3px">相手 シュート</div>
<div class="t" style="left:539.4px;top:385.19px;width:97.5px;text-align:right;font-size:8.9px;color:#333">1</div>
<div class="t" style="left:639.3px;top:385.19px;width:85.2px;text-align:right;font-size:8.9px;color:#333">2</div>
<div class="t" style="left:726.9px;top:385.19px;width:128.7px;text-align:right;font-size:8.9px;color:#333">17</div>
<div class="t" style="left:924.9px;top:384.69px;font-size:8.9px;color:#333;letter-spacing:0.1px">3P, 成功</div>
<div class="a" style="left:19.2px;top:395.96px;width:1005px;height:14.47px;background:#ffffff"></div>
<div class="a" style="left:19.2px;top:410.08px;width:1005px;height:0.9px;background:#c9d6c1"></div>
<div class="a" style="left:82.4px;top:395.96px;width:0.8px;height:13.97px;background:#e6e6e6"></div>
<div class="a" style="left:141px;top:395.96px;width:0.8px;height:13.97px;background:#e6e6e6"></div>
<div class="a" style="left:246.9px;top:395.96px;width:0.8px;height:13.97px;background:#e6e6e6"></div>
<div class="a" style="left:539px;top:395.96px;width:0.8px;height:13.97px;background:#e6e6e6"></div>
<div class="a" style="left:638.9px;top:395.96px;width:0.8px;height:13.97px;background:#e6e6e6"></div>
<div class="a" style="left:726.5px;top:395.96px;width:0.8px;height:13.97px;background:#e6e6e6"></div>
<div class="a" style="left:857.6px;top:395.96px;width:0.8px;height:13.97px;background:#e6e6e6"></div>
<div class="a" style="left:922.8px;top:395.96px;width:0.8px;height:13.97px;background:#e6e6e6"></div>
<div class="a" style="left:1099.6px;top:395.96px;width:0.8px;height:13.97px;background:#e6e6e6"></div>
<div class="a" style="left:371.9px;top:395.96px;width:0.8px;height:13.97px;background:#e6e6e6"></div>
<div class="a" style="left:454px;top:395.96px;width:0.8px;height:13.97px;background:#e6e6e6"></div>
<div class="t" style="left:19px;top:399.66px;width:61.4px;text-align:right;font-size:8.9px;color:#333">0:01:05</div>
<div class="t" style="left:82.8px;top:399.66px;width:56.2px;text-align:right;font-size:8.9px;color:#333">0:01:10</div>
<div class="t" style="left:141.4px;top:399.66px;width:103.5px;text-align:right;font-size:8.9px;color:#333">4.927362989</div>
<div class="t" style="left:249px;top:399.16px;font-size:8.9px;color:#333;letter-spacing:-0.3px">バスケットボール シュート</div>
<div class="t" style="left:375.2px;top:399.16px;font-size:8.9px;color:#333;letter-spacing:-0.3px">相手 シュート</div>
<div class="t" style="left:539.4px;top:399.66px;width:97.5px;text-align:right;font-size:8.9px;color:#333">2</div>
<div class="t" style="left:639.3px;top:399.66px;width:85.2px;text-align:right;font-size:8.9px;color:#333">2</div>
<div class="t" style="left:726.9px;top:399.66px;width:128.7px;text-align:right;font-size:8.9px;color:#333">18</div>
<div class="t" style="left:924.9px;top:399.16px;font-size:8.9px;color:#333;letter-spacing:0.1px">3P, 成功</div>
<div class="a" style="left:19.2px;top:410.43px;width:1005px;height:14.47px;background:#e2ecd9"></div>
<div class="a" style="left:19.2px;top:424.55px;width:1005px;height:0.9px;background:#c9d6c1"></div>
<div class="t" style="left:19px;top:414.13px;width:61.4px;text-align:right;font-size:8.9px;color:#333">0:01:06</div>
<div class="t" style="left:82.8px;top:414.13px;width:56.2px;text-align:right;font-size:8.9px;color:#333">0:01:09</div>
<div class="t" style="left:141.4px;top:414.13px;width:103.5px;text-align:right;font-size:8.9px;color:#333">2.91938</div>
<div class="t" style="left:249px;top:413.63px;font-size:8.9px;color:#333;letter-spacing:-0.3px">バスケットボール シュート2</div>
<div class="t" style="left:375.2px;top:413.63px;font-size:8.9px;color:#333;letter-spacing:-0.3px">Bチーム シュート</div>
<div class="t" style="left:539.4px;top:414.13px;width:97.5px;text-align:right;font-size:8.9px;color:#333">5</div>
<div class="t" style="left:639.3px;top:414.13px;width:85.2px;text-align:right;font-size:8.9px;color:#333">2</div>
<div class="t" style="left:726.9px;top:414.13px;width:128.7px;text-align:right;font-size:8.9px;color:#333">19</div>
<div class="t" style="left:924.9px;top:413.63px;font-size:8.9px;color:#333;letter-spacing:0.1px">3P, 成功</div>
<div class="a" style="left:19.2px;top:424.9px;width:1005px;height:14.47px;background:#ffffff"></div>
<div class="a" style="left:19.2px;top:439.02px;width:1005px;height:0.9px;background:#c9d6c1"></div>
<div class="a" style="left:82.4px;top:424.9px;width:0.8px;height:13.97px;background:#e6e6e6"></div>
<div class="a" style="left:141px;top:424.9px;width:0.8px;height:13.97px;background:#e6e6e6"></div>
<div class="a" style="left:246.9px;top:424.9px;width:0.8px;height:13.97px;background:#e6e6e6"></div>
<div class="a" style="left:539px;top:424.9px;width:0.8px;height:13.97px;background:#e6e6e6"></div>
<div class="a" style="left:638.9px;top:424.9px;width:0.8px;height:13.97px;background:#e6e6e6"></div>
<div class="a" style="left:726.5px;top:424.9px;width:0.8px;height:13.97px;background:#e6e6e6"></div>
<div class="a" style="left:857.6px;top:424.9px;width:0.8px;height:13.97px;background:#e6e6e6"></div>
<div class="a" style="left:922.8px;top:424.9px;width:0.8px;height:13.97px;background:#e6e6e6"></div>
<div class="a" style="left:1099.6px;top:424.9px;width:0.8px;height:13.97px;background:#e6e6e6"></div>
<div class="a" style="left:371.9px;top:424.9px;width:0.8px;height:13.97px;background:#e6e6e6"></div>
<div class="a" style="left:454px;top:424.9px;width:0.8px;height:13.97px;background:#e6e6e6"></div>
<div class="t" style="left:19px;top:428.6px;width:61.4px;text-align:right;font-size:8.9px;color:#333">0:01:08</div>
<div class="t" style="left:82.8px;top:428.6px;width:56.2px;text-align:right;font-size:8.9px;color:#333">0:01:09</div>
<div class="t" style="left:141.4px;top:428.6px;width:103.5px;text-align:right;font-size:8.9px;color:#333">1.603296</div>
<div class="t" style="left:249px;top:428.1px;font-size:8.9px;color:#333;letter-spacing:-0.3px">バスケットボール シュート2</div>
<div class="t" style="left:375.2px;top:428.1px;font-size:8.9px;color:#333;letter-spacing:-0.3px">Bチーム シュート</div>
<div class="t" style="left:539.4px;top:428.6px;width:97.5px;text-align:right;font-size:8.9px;color:#333">6</div>
<div class="t" style="left:639.3px;top:428.6px;width:85.2px;text-align:right;font-size:8.9px;color:#333">2</div>
<div class="t" style="left:726.9px;top:428.6px;width:128.7px;text-align:right;font-size:8.9px;color:#333">20</div>
<div class="t" style="left:924.9px;top:428.1px;font-size:8.9px;color:#333;letter-spacing:0.1px">3P, 成功</div>
<div class="a" style="left:19.2px;top:439.37px;width:1005px;height:14.47px;background:#e2ecd9"></div>
<div class="a" style="left:19.2px;top:453.49px;width:1005px;height:0.9px;background:#c9d6c1"></div>
<div class="t" style="left:19px;top:443.07px;width:61.4px;text-align:right;font-size:8.9px;color:#333">0:01:08</div>
<div class="t" style="left:82.8px;top:443.07px;width:56.2px;text-align:right;font-size:8.9px;color:#333">0:01:12</div>
<div class="t" style="left:141.4px;top:443.07px;width:103.5px;text-align:right;font-size:8.9px;color:#333">3.652756</div>
<div class="t" style="left:249px;top:442.57px;font-size:8.9px;color:#333;letter-spacing:-0.3px">バスケットボール シュート2</div>
<div class="t" style="left:375.2px;top:442.57px;font-size:8.9px;color:#333;letter-spacing:-0.3px">Bチーム シュート</div>
<div class="t" style="left:539.4px;top:443.07px;width:97.5px;text-align:right;font-size:8.9px;color:#333">7</div>
<div class="t" style="left:639.3px;top:443.07px;width:85.2px;text-align:right;font-size:8.9px;color:#333">2</div>
<div class="t" style="left:726.9px;top:443.07px;width:128.7px;text-align:right;font-size:8.9px;color:#333">21</div>
<div class="t" style="left:924.9px;top:442.57px;font-size:8.9px;color:#333;letter-spacing:0.1px">3P, 成功</div>
<div class="a" style="left:19.2px;top:453.84px;width:1005px;height:14.47px;background:#ffffff"></div>
<div class="a" style="left:19.2px;top:467.96px;width:1005px;height:0.9px;background:#c9d6c1"></div>
<div class="a" style="left:82.4px;top:453.84px;width:0.8px;height:13.97px;background:#e6e6e6"></div>
<div class="a" style="left:141px;top:453.84px;width:0.8px;height:13.97px;background:#e6e6e6"></div>
<div class="a" style="left:246.9px;top:453.84px;width:0.8px;height:13.97px;background:#e6e6e6"></div>
<div class="a" style="left:539px;top:453.84px;width:0.8px;height:13.97px;background:#e6e6e6"></div>
<div class="a" style="left:638.9px;top:453.84px;width:0.8px;height:13.97px;background:#e6e6e6"></div>
<div class="a" style="left:726.5px;top:453.84px;width:0.8px;height:13.97px;background:#e6e6e6"></div>
<div class="a" style="left:857.6px;top:453.84px;width:0.8px;height:13.97px;background:#e6e6e6"></div>
<div class="a" style="left:922.8px;top:453.84px;width:0.8px;height:13.97px;background:#e6e6e6"></div>
<div class="a" style="left:1099.6px;top:453.84px;width:0.8px;height:13.97px;background:#e6e6e6"></div>
<div class="a" style="left:371.9px;top:453.84px;width:0.8px;height:13.97px;background:#e6e6e6"></div>
<div class="a" style="left:454px;top:453.84px;width:0.8px;height:13.97px;background:#e6e6e6"></div>
<div class="t" style="left:19px;top:457.54px;width:61.4px;text-align:right;font-size:8.9px;color:#333">0:01:11</div>
<div class="t" style="left:82.8px;top:457.54px;width:56.2px;text-align:right;font-size:8.9px;color:#333">0:01:13</div>
<div class="t" style="left:141.4px;top:457.54px;width:103.5px;text-align:right;font-size:8.9px;color:#333">1.592498</div>
<div class="t" style="left:249px;top:457.04px;font-size:8.9px;color:#333;letter-spacing:-0.3px">バスケットボール シュート2</div>
<div class="t" style="left:375.2px;top:457.04px;font-size:8.9px;color:#333;letter-spacing:-0.3px">Bチーム シュート</div>
<div class="t" style="left:539.4px;top:457.54px;width:97.5px;text-align:right;font-size:8.9px;color:#333">8</div>
<div class="t" style="left:639.3px;top:457.54px;width:85.2px;text-align:right;font-size:8.9px;color:#333">2</div>
<div class="t" style="left:726.9px;top:457.54px;width:128.7px;text-align:right;font-size:8.9px;color:#333">22</div>
<div class="t" style="left:924.9px;top:457.04px;font-size:8.9px;color:#333;letter-spacing:0.1px">3P, 成功</div>
<div class="a" style="left:19.2px;top:468.31px;width:1005px;height:14.47px;background:#e2ecd9"></div>
<div class="a" style="left:19.2px;top:482.43px;width:1005px;height:0.9px;background:#c9d6c1"></div>
<div class="t" style="left:19px;top:472.01px;width:61.4px;text-align:right;font-size:8.9px;color:#333">0:01:19</div>
<div class="t" style="left:82.8px;top:472.01px;width:56.2px;text-align:right;font-size:8.9px;color:#333">0:01:20</div>
<div class="t" style="left:141.4px;top:472.01px;width:103.5px;text-align:right;font-size:8.9px;color:#333">1.321787</div>
<div class="t" style="left:249px;top:471.51px;font-size:8.9px;color:#333;letter-spacing:-0.3px">バスケットボール シュート2</div>
<div class="t" style="left:375.2px;top:471.51px;font-size:8.9px;color:#333;letter-spacing:-0.3px">Aチーム シュート</div>
<div class="t" style="left:539.4px;top:472.01px;width:97.5px;text-align:right;font-size:8.9px;color:#333">10</div>
<div class="t" style="left:639.3px;top:472.01px;width:85.2px;text-align:right;font-size:8.9px;color:#333">0</div>
<div class="t" style="left:726.9px;top:472.01px;width:128.7px;text-align:right;font-size:8.9px;color:#333">23</div>
<div class="t" style="left:924.9px;top:471.51px;font-size:8.9px;color:#333;letter-spacing:0.1px"></div>
<div class="a" style="left:19.2px;top:482.78px;width:1005px;height:14.47px;background:#ffffff"></div>
<div class="a" style="left:19.2px;top:496.9px;width:1005px;height:0.9px;background:#c9d6c1"></div>
<div class="a" style="left:82.4px;top:482.78px;width:0.8px;height:13.97px;background:#e6e6e6"></div>
<div class="a" style="left:141px;top:482.78px;width:0.8px;height:13.97px;background:#e6e6e6"></div>
<div class="a" style="left:246.9px;top:482.78px;width:0.8px;height:13.97px;background:#e6e6e6"></div>
<div class="a" style="left:539px;top:482.78px;width:0.8px;height:13.97px;background:#e6e6e6"></div>
<div class="a" style="left:638.9px;top:482.78px;width:0.8px;height:13.97px;background:#e6e6e6"></div>
<div class="a" style="left:726.5px;top:482.78px;width:0.8px;height:13.97px;background:#e6e6e6"></div>
<div class="a" style="left:857.6px;top:482.78px;width:0.8px;height:13.97px;background:#e6e6e6"></div>
<div class="a" style="left:922.8px;top:482.78px;width:0.8px;height:13.97px;background:#e6e6e6"></div>
<div class="a" style="left:1099.6px;top:482.78px;width:0.8px;height:13.97px;background:#e6e6e6"></div>
<div class="a" style="left:371.9px;top:482.78px;width:0.8px;height:13.97px;background:#e6e6e6"></div>
<div class="a" style="left:454px;top:482.78px;width:0.8px;height:13.97px;background:#e6e6e6"></div>
<div class="t" style="left:19px;top:486.48px;width:61.4px;text-align:right;font-size:8.9px;color:#333">0:01:21</div>
<div class="t" style="left:82.8px;top:486.48px;width:56.2px;text-align:right;font-size:8.9px;color:#333">0:01:23</div>
<div class="t" style="left:141.4px;top:486.48px;width:103.5px;text-align:right;font-size:8.9px;color:#333">1.990735</div>
<div class="t" style="left:249px;top:485.98px;font-size:8.9px;color:#333;letter-spacing:-0.3px">バスケットボール シュート2</div>
<div class="t" style="left:375.2px;top:485.98px;font-size:8.9px;color:#333;letter-spacing:-0.3px">Aチーム シュート</div>
<div class="t" style="left:539.4px;top:486.48px;width:97.5px;text-align:right;font-size:8.9px;color:#333">11</div>
<div class="t" style="left:639.3px;top:486.48px;width:85.2px;text-align:right;font-size:8.9px;color:#333">0</div>
<div class="t" style="left:726.9px;top:486.48px;width:128.7px;text-align:right;font-size:8.9px;color:#333">24</div>
<div class="t" style="left:924.9px;top:485.98px;font-size:8.9px;color:#333;letter-spacing:0.1px"></div>
<div class="a" style="left:19.2px;top:497.25px;width:1005px;height:14.47px;background:#e2ecd9"></div>
<div class="a" style="left:19.2px;top:511.37px;width:1005px;height:0.9px;background:#c9d6c1"></div>
<div class="t" style="left:19px;top:500.95px;width:61.4px;text-align:right;font-size:8.9px;color:#333">0:01:24</div>
<div class="t" style="left:82.8px;top:500.95px;width:56.2px;text-align:right;font-size:8.9px;color:#333">0:01:26</div>
<div class="t" style="left:141.4px;top:500.95px;width:103.5px;text-align:right;font-size:8.9px;color:#333">2.544723371</div>
<div class="t" style="left:249px;top:500.45px;font-size:8.9px;color:#333;letter-spacing:-0.3px">バスケットボール シュート</div>
<div class="t" style="left:375.2px;top:500.45px;font-size:8.9px;color:#333;letter-spacing:-0.3px">相手 シュート</div>
<div class="t" style="left:539.4px;top:500.95px;width:97.5px;text-align:right;font-size:8.9px;color:#333">3</div>
<div class="t" style="left:639.3px;top:500.95px;width:85.2px;text-align:right;font-size:8.9px;color:#333">0</div>
<div class="t" style="left:726.9px;top:500.95px;width:128.7px;text-align:right;font-size:8.9px;color:#333">25</div>
<div class="t" style="left:924.9px;top:500.45px;font-size:8.9px;color:#333;letter-spacing:0.1px"></div>
<div class="a" style="left:19.2px;top:511.72px;width:1005px;height:14.47px;background:#ffffff"></div>
<div class="a" style="left:19.2px;top:525.84px;width:1005px;height:0.9px;background:#c9d6c1"></div>
<div class="a" style="left:82.4px;top:511.72px;width:0.8px;height:13.97px;background:#e6e6e6"></div>
<div class="a" style="left:141px;top:511.72px;width:0.8px;height:13.97px;background:#e6e6e6"></div>
<div class="a" style="left:246.9px;top:511.72px;width:0.8px;height:13.97px;background:#e6e6e6"></div>
<div class="a" style="left:539px;top:511.72px;width:0.8px;height:13.97px;background:#e6e6e6"></div>
<div class="a" style="left:638.9px;top:511.72px;width:0.8px;height:13.97px;background:#e6e6e6"></div>
<div class="a" style="left:726.5px;top:511.72px;width:0.8px;height:13.97px;background:#e6e6e6"></div>
<div class="a" style="left:857.6px;top:511.72px;width:0.8px;height:13.97px;background:#e6e6e6"></div>
<div class="a" style="left:922.8px;top:511.72px;width:0.8px;height:13.97px;background:#e6e6e6"></div>
<div class="a" style="left:1099.6px;top:511.72px;width:0.8px;height:13.97px;background:#e6e6e6"></div>
<div class="a" style="left:371.9px;top:511.72px;width:0.8px;height:13.97px;background:#e6e6e6"></div>
<div class="a" style="left:454px;top:511.72px;width:0.8px;height:13.97px;background:#e6e6e6"></div>
<div class="t" style="left:19px;top:515.42px;width:61.4px;text-align:right;font-size:8.9px;color:#333">0:01:26</div>
<div class="t" style="left:82.8px;top:515.42px;width:56.2px;text-align:right;font-size:8.9px;color:#333">0:01:27</div>
<div class="t" style="left:141.4px;top:515.42px;width:103.5px;text-align:right;font-size:8.9px;color:#333">1.331613</div>
<div class="t" style="left:249px;top:514.92px;font-size:8.9px;color:#333;letter-spacing:-0.3px">バスケットボール シュート2</div>
<div class="t" style="left:375.2px;top:514.92px;font-size:8.9px;color:#333;letter-spacing:-0.3px">Bチーム シュート</div>
<div class="t" style="left:539.4px;top:515.42px;width:97.5px;text-align:right;font-size:8.9px;color:#333">9</div>
<div class="t" style="left:639.3px;top:515.42px;width:85.2px;text-align:right;font-size:8.9px;color:#333">2</div>
<div class="t" style="left:726.9px;top:515.42px;width:128.7px;text-align:right;font-size:8.9px;color:#333">26</div>
<div class="t" style="left:924.9px;top:514.92px;font-size:8.9px;color:#333;letter-spacing:0.1px">2P, 失敗</div>
<div class="a" style="left:19.2px;top:526.19px;width:1005px;height:14.47px;background:#e2ecd9"></div>
<div class="a" style="left:19.2px;top:540.31px;width:1005px;height:0.9px;background:#c9d6c1"></div>
<div class="t" style="left:19px;top:529.89px;width:61.4px;text-align:right;font-size:8.9px;color:#333">0:01:26</div>
<div class="t" style="left:82.8px;top:529.89px;width:56.2px;text-align:right;font-size:8.9px;color:#333">0:01:31</div>
<div class="t" style="left:141.4px;top:529.89px;width:103.5px;text-align:right;font-size:8.9px;color:#333">4.86006</div>
<div class="t" style="left:249px;top:529.39px;font-size:8.9px;color:#333;letter-spacing:-0.3px">バスケットボール シュート</div>
<div class="t" style="left:375.2px;top:529.39px;font-size:8.9px;color:#333;letter-spacing:-0.3px">相手 シュート</div>
<div class="t" style="left:539.4px;top:529.89px;width:97.5px;text-align:right;font-size:8.9px;color:#333">4</div>
<div class="t" style="left:639.3px;top:529.89px;width:85.2px;text-align:right;font-size:8.9px;color:#333">2</div>
<div class="t" style="left:726.9px;top:529.89px;width:128.7px;text-align:right;font-size:8.9px;color:#333">27</div>
<div class="t" style="left:924.9px;top:529.39px;font-size:8.9px;color:#333;letter-spacing:0.1px">2P, 成功</div>
<div class="a" style="left:19.2px;top:540.66px;width:1005px;height:14.47px;background:#ffffff"></div>
<div class="a" style="left:19.2px;top:554.78px;width:1005px;height:0.9px;background:#c9d6c1"></div>
<div class="a" style="left:82.4px;top:540.66px;width:0.8px;height:13.97px;background:#e6e6e6"></div>
<div class="a" style="left:141px;top:540.66px;width:0.8px;height:13.97px;background:#e6e6e6"></div>
<div class="a" style="left:246.9px;top:540.66px;width:0.8px;height:13.97px;background:#e6e6e6"></div>
<div class="a" style="left:539px;top:540.66px;width:0.8px;height:13.97px;background:#e6e6e6"></div>
<div class="a" style="left:638.9px;top:540.66px;width:0.8px;height:13.97px;background:#e6e6e6"></div>
<div class="a" style="left:726.5px;top:540.66px;width:0.8px;height:13.97px;background:#e6e6e6"></div>
<div class="a" style="left:857.6px;top:540.66px;width:0.8px;height:13.97px;background:#e6e6e6"></div>
<div class="a" style="left:922.8px;top:540.66px;width:0.8px;height:13.97px;background:#e6e6e6"></div>
<div class="a" style="left:1099.6px;top:540.66px;width:0.8px;height:13.97px;background:#e6e6e6"></div>
<div class="a" style="left:371.9px;top:540.66px;width:0.8px;height:13.97px;background:#e6e6e6"></div>
<div class="a" style="left:454px;top:540.66px;width:0.8px;height:13.97px;background:#e6e6e6"></div>
<div class="t" style="left:19px;top:544.36px;width:61.4px;text-align:right;font-size:8.9px;color:#333">0:01:26</div>
<div class="t" style="left:82.8px;top:544.36px;width:56.2px;text-align:right;font-size:8.9px;color:#333">0:01:29</div>
<div class="t" style="left:141.4px;top:544.36px;width:103.5px;text-align:right;font-size:8.9px;color:#333">3</div>
<div class="t" style="left:249px;top:543.86px;font-size:8.9px;color:#333;letter-spacing:-0.3px">バスケットボール シュート</div>
<div class="t" style="left:375.2px;top:543.86px;font-size:8.9px;color:#333;letter-spacing:-0.3px">相手 シュート</div>
<div class="t" style="left:539.4px;top:544.36px;width:97.5px;text-align:right;font-size:8.9px;color:#333">5</div>
<div class="t" style="left:639.3px;top:544.36px;width:85.2px;text-align:right;font-size:8.9px;color:#333">4</div>
<div class="t" style="left:726.9px;top:544.36px;width:128.7px;text-align:right;font-size:8.9px;color:#333">28</div>
<div class="t" style="left:924.9px;top:543.86px;font-size:8.9px;color:#333;letter-spacing:0.1px">2P, 成功, 2P, 失敗</div>
<div class="a" style="left:19.2px;top:555.13px;width:1005px;height:14.47px;background:#e2ecd9"></div>
<div class="a" style="left:19.2px;top:569.25px;width:1005px;height:0.9px;background:#c9d6c1"></div>
<div class="t" style="left:19px;top:558.83px;width:61.4px;text-align:right;font-size:8.9px;color:#333">0:01:27</div>
<div class="t" style="left:82.8px;top:558.83px;width:56.2px;text-align:right;font-size:8.9px;color:#333">0:01:28</div>
<div class="t" style="left:141.4px;top:558.83px;width:103.5px;text-align:right;font-size:8.9px;color:#333">1.033421206</div>
<div class="t" style="left:249px;top:558.33px;font-size:8.9px;color:#333;letter-spacing:-0.3px">バスケットボール シュート2</div>
<div class="t" style="left:375.2px;top:558.33px;font-size:8.9px;color:#333;letter-spacing:-0.3px">Bチーム シュート</div>
<div class="t" style="left:539.4px;top:558.83px;width:97.5px;text-align:right;font-size:8.9px;color:#333">10</div>
<div class="t" style="left:639.3px;top:558.83px;width:85.2px;text-align:right;font-size:8.9px;color:#333">2</div>
<div class="t" style="left:726.9px;top:558.83px;width:128.7px;text-align:right;font-size:8.9px;color:#333">29</div>
<div class="t" style="left:924.9px;top:558.33px;font-size:8.9px;color:#333;letter-spacing:0.1px">2P, 成功</div>
<div class="a" style="left:19.2px;top:569.6px;width:1005px;height:14.47px;background:#ffffff"></div>
<div class="a" style="left:19.2px;top:583.72px;width:1005px;height:0.9px;background:#c9d6c1"></div>
<div class="a" style="left:82.4px;top:569.6px;width:0.8px;height:13.97px;background:#e6e6e6"></div>
<div class="a" style="left:141px;top:569.6px;width:0.8px;height:13.97px;background:#e6e6e6"></div>
<div class="a" style="left:246.9px;top:569.6px;width:0.8px;height:13.97px;background:#e6e6e6"></div>
<div class="a" style="left:539px;top:569.6px;width:0.8px;height:13.97px;background:#e6e6e6"></div>
<div class="a" style="left:638.9px;top:569.6px;width:0.8px;height:13.97px;background:#e6e6e6"></div>
<div class="a" style="left:726.5px;top:569.6px;width:0.8px;height:13.97px;background:#e6e6e6"></div>
<div class="a" style="left:857.6px;top:569.6px;width:0.8px;height:13.97px;background:#e6e6e6"></div>
<div class="a" style="left:922.8px;top:569.6px;width:0.8px;height:13.97px;background:#e6e6e6"></div>
<div class="a" style="left:1099.6px;top:569.6px;width:0.8px;height:13.97px;background:#e6e6e6"></div>
<div class="a" style="left:371.9px;top:569.6px;width:0.8px;height:13.97px;background:#e6e6e6"></div>
<div class="a" style="left:454px;top:569.6px;width:0.8px;height:13.97px;background:#e6e6e6"></div>
<div class="t" style="left:19px;top:573.3px;width:61.4px;text-align:right;font-size:8.9px;color:#333">0:01:28</div>
<div class="t" style="left:82.8px;top:573.3px;width:56.2px;text-align:right;font-size:8.9px;color:#333">0:01:31</div>
<div class="t" style="left:141.4px;top:573.3px;width:103.5px;text-align:right;font-size:8.9px;color:#333">3.326626</div>
<div class="t" style="left:249px;top:572.8px;font-size:8.9px;color:#333;letter-spacing:-0.3px">バスケットボール シュート2</div>
<div class="t" style="left:375.2px;top:572.8px;font-size:8.9px;color:#333;letter-spacing:-0.3px">Bチーム シュート</div>
<div class="t" style="left:539.4px;top:573.3px;width:97.5px;text-align:right;font-size:8.9px;color:#333">11</div>
<div class="t" style="left:639.3px;top:573.3px;width:85.2px;text-align:right;font-size:8.9px;color:#333">2</div>
<div class="t" style="left:726.9px;top:573.3px;width:128.7px;text-align:right;font-size:8.9px;color:#333">30</div>
<div class="t" style="left:924.9px;top:572.8px;font-size:8.9px;color:#333;letter-spacing:0.1px">2P, 成功</div>
<div class="a" style="left:19.2px;top:584.07px;width:1005px;height:14.47px;background:#e2ecd9"></div>
<div class="a" style="left:19.2px;top:598.19px;width:1005px;height:0.9px;background:#c9d6c1"></div>
<div class="t" style="left:19px;top:587.77px;width:61.4px;text-align:right;font-size:8.9px;color:#333">0:01:28</div>
<div class="t" style="left:82.8px;top:587.77px;width:56.2px;text-align:right;font-size:8.9px;color:#333">0:01:31</div>
<div class="t" style="left:141.4px;top:587.77px;width:103.5px;text-align:right;font-size:8.9px;color:#333">2.108461</div>
<div class="t" style="left:249px;top:587.27px;font-size:8.9px;color:#333;letter-spacing:-0.3px">バスケットボール シュート2</div>
<div class="t" style="left:375.2px;top:587.27px;font-size:8.9px;color:#333;letter-spacing:-0.3px">Bチーム シュート</div>
<div class="t" style="left:539.4px;top:587.77px;width:97.5px;text-align:right;font-size:8.9px;color:#333">12</div>
<div class="t" style="left:639.3px;top:587.77px;width:85.2px;text-align:right;font-size:8.9px;color:#333">2</div>
<div class="t" style="left:726.9px;top:587.77px;width:128.7px;text-align:right;font-size:8.9px;color:#333">31</div>
<div class="t" style="left:924.9px;top:587.27px;font-size:8.9px;color:#333;letter-spacing:0.1px">2P, 失敗</div>
<div class="a" style="left:453.3px;top:148.97px;width:89.8px;height:470px;background:#fff"></div>
<div class="a" style="left:638.4px;top:352.05px;width:89.3px;height:15.47px;box-shadow:inset 0 0 0 1.6px #3f7550"></div>
<div class="a" style="left:725.6px;top:365.12px;width:3.4px;height:3.4px;background:#3f7550;box-shadow:0 0 0 0.6px #fff"></div>
<div class="a" style="left:0;top:595.6px;width:1024px;height:18px;background:#efefef"></div>
<div class="a" style="left:0;top:595.6px;width:1024px;height:0.8px;background:#dcdcdc"></div>
<svg class="a" style="left:8px;top:600px" width="30" height="11" viewBox="8 600 30 11"><path d="M15.8 601.2 V609 L11 605.1 Z M27.2 601.2 V609 L32 605.1 Z" fill="#c2c2c2"/></svg>
<div class="a" style="left:44px;top:595.6px;width:158.7px;height:15.6px;background:#fff;border-radius:0 0 2px 2px;box-shadow:0 0.8px 1px rgba(0,0,0,.15)"></div>
<div class="t" style="left:59.5px;top:600.8px;font-size:8.3px;color:#4a6e55;-webkit-text-stroke:0.15px #4a6e55">バスケットボール(入力できない人)</div>
<div class="t" style="left:217.5px;top:600.5px;font-size:8.5px;color:#555">Sheet1</div>
<div class="a" style="left:259.8px;top:598px;width:0.8px;height:13px;background:#d8d8d8"></div>
<div class="a" style="left:288.2px;top:598px;width:0.8px;height:13px;background:#d8d8d8"></div>
<svg class="a" style="left:268px;top:598px" width="14" height="14" viewBox="268 598 14 14"><path d="M275 601.6 V608.6 M271.5 605.1 H278.5" stroke="#333" stroke-width="1.3"/></svg>
<div class="a" style="left:0;top:614.1px;width:1024px;height:17px;background:#e6e6e6"></div>
<div class="a" style="left:0;top:614.1px;width:1024px;height:0.8px;background:#d0d0d0"></div>
<div class="t" style="left:17.9px;top:619.3px;font-size:7.6px;color:#3a3a3a;-webkit-text-stroke:0.15px #3a3a3a">準備完了</div>
<svg class="a" style="left:60px;top:614px" width="70" height="17" viewBox="60 614 70 17" fill="none" stroke="#444" stroke-width="0.9">
<path d="M66.4 619.2 H74.6 M72.4 619.2 V626.6 M66.4 619.2 V626.6 M64.8 626.6 H72.4" stroke-width="1"/><circle cx="66.4" cy="619" r="1.4" fill="#444"/>
<path d="M89.5 620.4 C88.2 619.8 88 619 88.6 618.6 L91.4 619.4 A1.6 1.6 0 1 1 94.2 619.4 L97.2 618.6 C97.8 619.2 97.2 620 96 620.4 L95 620.8 V622 M91 620.8 V623.4 L89.4 627 M92 625.6 L93.6 627.2 L98.4 622.2" stroke="#555" stroke-width="0.85" stroke-linejoin="round" stroke-linecap="round"/>
</svg>
<div class="t" style="left:101.6px;top:619.3px;font-size:7.6px;color:#3a3a3a;-webkit-text-stroke:0.1px #3a3a3a">アクセシビリティ: 問題ありません</div>
<div class="a" style="left:793.4px;top:614.9px;width:26.4px;height:16.1px;background:#b9b9b9"></div>
<svg class="a" style="left:790px;top:614px" width="234" height="17" viewBox="790 614 234 17" fill="none" stroke="#555" stroke-width="1">
<rect x="801.8" y="618.2" width="9" height="9" stroke="#eeeeee" stroke-width="0.9"/><path d="M804.8 618.2 V627.2 M807.8 618.2 V627.2 M801.8 621.2 H810.8 M801.8 624.2 H810.8" stroke="#eeeeee" stroke-width="0.9"/>
<rect x="827.6" y="618.4" width="9.8" height="8.8" fill="#cfcfcf" stroke="#666" stroke-width="1"/><rect x="830" y="620.4" width="5" height="4.6" fill="#e8e8e8" stroke="#777" stroke-width="0.8"/>
<path d="M853.4 618.6 H863 M855.6 618.6 V622.4 H860.6 V618.6 M853.4 618.6 V627 H863 V621" stroke="#555" stroke-width="1"/>
<path d="M876.6 622.7 H881.6 M964.6 622.7 H970.4 M967.5 619.8 V625.6" stroke="#444" stroke-width="1.35"/>
</svg>
<div class="a" style="left:888px;top:621.6px;width:72px;height:2.2px;border-radius:1px;background:#a0a0a0"></div>
<div class="a" style="left:918px;top:616.9px;width:11.4px;height:11.4px;border-radius:50%;background:#fff;box-shadow:0 0.5px 1.2px rgba(0,0,0,.35)"></div>
<div class="t" style="left:983.5px;top:618.6px;font-size:8.6px;color:#444">100%</div>
</div></body></html>
